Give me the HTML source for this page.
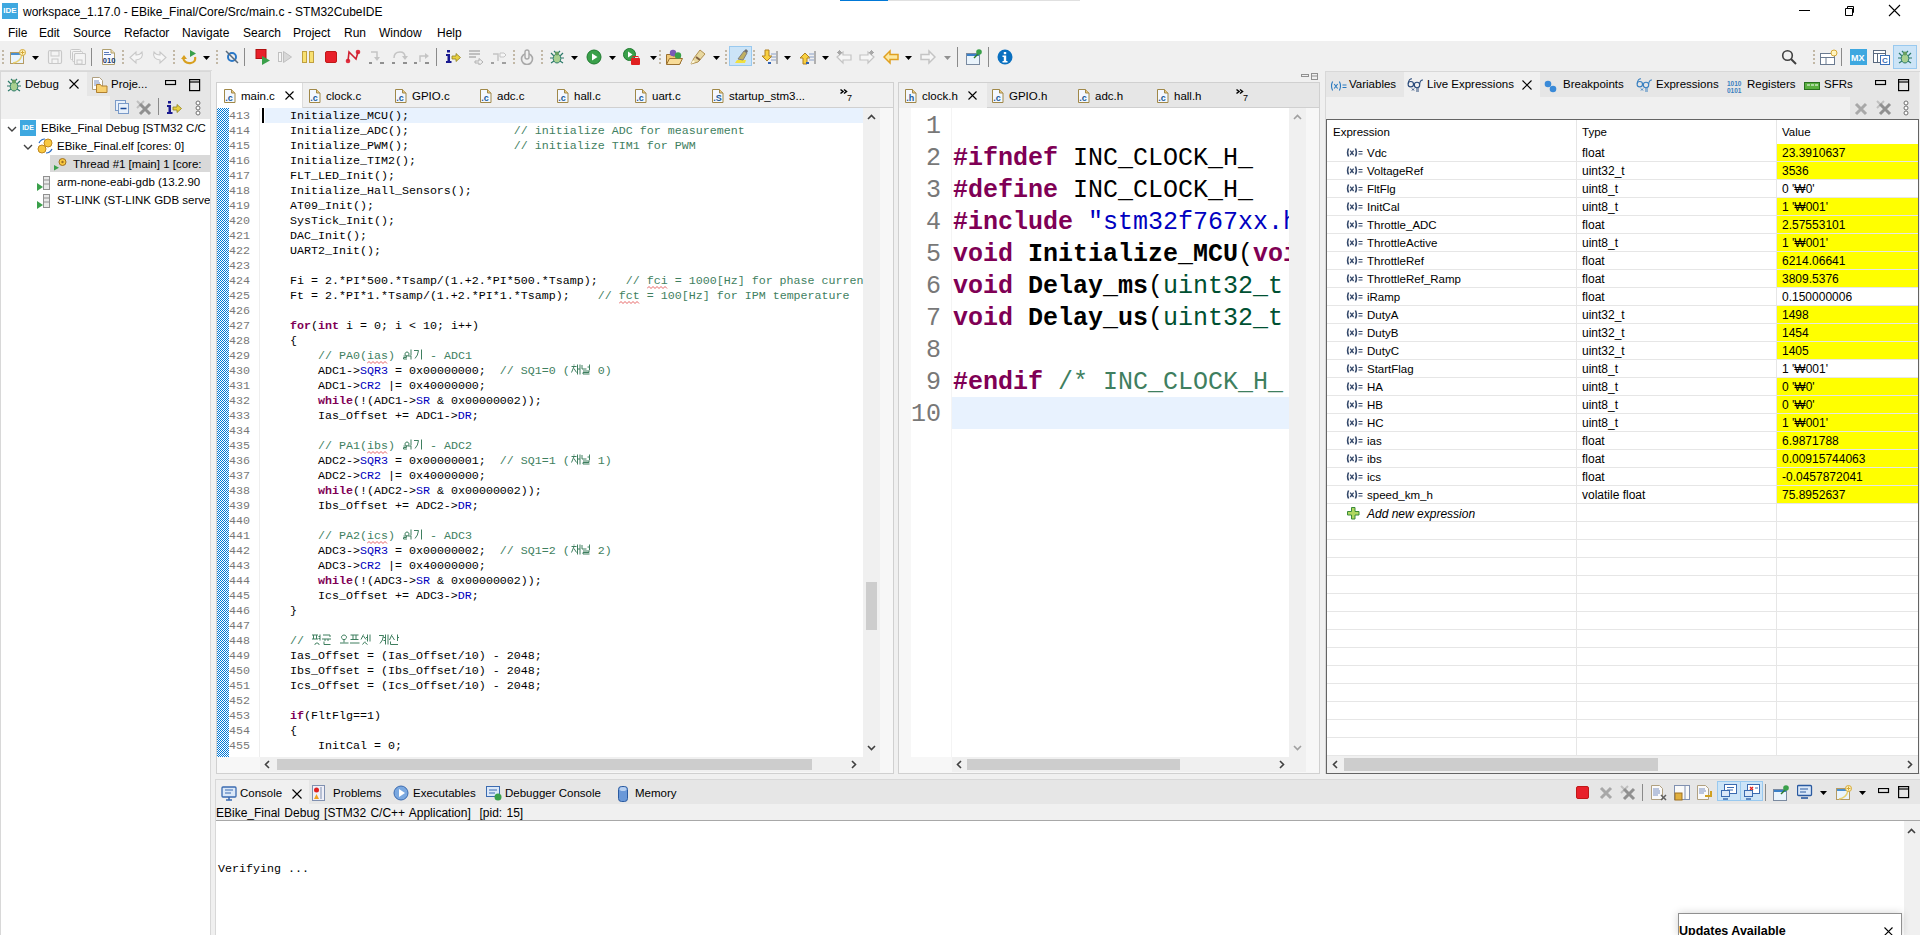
<!DOCTYPE html><html><head><meta charset="utf-8"><style>
*{margin:0;padding:0;box-sizing:border-box}
html,body{width:1920px;height:935px;overflow:hidden;background:#f0f0f0;font-family:"Liberation Sans",sans-serif;font-size:12px;color:#000;position:relative}
.abs{position:absolute}
.t{position:absolute;white-space:pre;line-height:1}
.mono{font-family:"Liberation Mono",monospace}
.k{color:#7f0055;font-weight:bold}
.f{color:#0000c0}
.c{color:#3f7f5f}
.ln{position:absolute;white-space:pre;font-family:"Liberation Mono",monospace;color:#787878;text-align:right}
</style></head><body>
<div class="abs" style="left:0px;top:0px;width:1920px;height:41px;background:#fff;"></div>
<div class="abs" style="left:840px;top:0px;width:48px;height:1px;background:#0078d7;"></div>
<div class="abs" style="left:888px;top:0px;width:192px;height:1px;background:#e0e0e0;"></div>
<div class="abs" style="left:2px;top:3px;width:16px;height:16px;background:#3ea8e0;color:#fff;font-size:8px;font-weight:bold;text-align:center;line-height:16px">IDE</div>
<div class="t" style="left:23px;top:6px;font-size:12px">workspace_1.17.0 - EBike_Final/Core/Src/main.c - STM32CubeIDE</div>
<div class="abs" style="left:1799px;top:10px;width:11px;height:1px;background:#000;"></div>
<svg class="abs" style="left:1843px;top:5px" width="12" height="12"><path d="M2.5 3.5h7v7h-7z M4.5 3.5v-2h6v6h-1.5" fill="none" stroke="#000" stroke-width="1"/></svg>
<svg class="abs" style="left:1888px;top:4px" width="13" height="13"><path d="M1 1L12 12M12 1L1 12" stroke="#000" stroke-width="1.1"/></svg>
<div class="t" style="left:8px;top:27px;font-size:12px">File</div>
<div class="t" style="left:39px;top:27px;font-size:12px">Edit</div>
<div class="t" style="left:73px;top:27px;font-size:12px">Source</div>
<div class="t" style="left:124px;top:27px;font-size:12px">Refactor</div>
<div class="t" style="left:182px;top:27px;font-size:12px">Navigate</div>
<div class="t" style="left:243px;top:27px;font-size:12px">Search</div>
<div class="t" style="left:293px;top:27px;font-size:12px">Project</div>
<div class="t" style="left:344px;top:27px;font-size:12px">Run</div>
<div class="t" style="left:379px;top:27px;font-size:12px">Window</div>
<div class="t" style="left:437px;top:27px;font-size:12px">Help</div>
<div class="abs" style="left:0px;top:70px;width:212px;height:1px;background:#dcdcdc;"></div>
<svg class="abs" style="left:2px;top:50px" width="2" height="14" viewBox="0 0 2 14"><rect x="0" y="0" width="2" height="2" fill="#c2b8a6"/><rect x="0" y="4" width="2" height="2" fill="#c2b8a6"/><rect x="0" y="8" width="2" height="2" fill="#c2b8a6"/><rect x="0" y="12" width="2" height="2" fill="#c2b8a6"/></svg>
<svg class="abs" style="left:10px;top:49px" width="16" height="16" viewBox="0 0 16 16"><rect x="0.5" y="3.5" width="13" height="11" fill="#eaf4fc" stroke="#b59b62"/><rect x="1" y="4" width="12" height="2" fill="#4a90d0"/><path d="M3 14 Q10 13 12 6" stroke="#e8d070" fill="none" stroke-width="1.5"/><circle cx="12.5" cy="3.5" r="3" fill="#fff4c0" stroke="#d4a838"/><path d="M12.5 1.5v4M10.5 3.5h4" stroke="#d4a838"/></svg>
<svg class="abs" style="left:32px;top:56px" width="7" height="4" viewBox="0 0 7 4"><path d="M0 0h7L3.5 4z" fill="#000"/></svg>
<svg class="abs" style="left:47px;top:49px" width="16" height="16" viewBox="0 0 16 16"><rect x="1.5" y="1.5" width="13" height="13" rx="1.5" fill="#f4f4f4" stroke="#c8c8c8" stroke-width="1.2"/><rect x="4" y="2" width="8" height="5" fill="none" stroke="#c8c8c8"/><rect x="5" y="10" width="6" height="4.5" fill="none" stroke="#c8c8c8"/></svg>
<svg class="abs" style="left:70px;top:49px" width="16" height="16" viewBox="0 0 16 16"><rect x="0.5" y="0.5" width="10" height="10" rx="1" fill="#f4f4f4" stroke="#c8c8c8"/><rect x="2.5" y="2.5" width="10" height="10" rx="1" fill="#f4f4f4" stroke="#c8c8c8"/><rect x="4.5" y="4.5" width="11" height="11" rx="1" fill="#f4f4f4" stroke="#c8c8c8" stroke-width="1.1"/><rect x="7" y="11" width="5" height="4" fill="none" stroke="#c8c8c8"/></svg>
<svg class="abs" style="left:91px;top:48px" width="1" height="18" viewBox="0 0 1 18"><rect width="1" height="18" fill="#8a8a8a"/></svg>
<svg class="abs" style="left:101px;top:49px" width="16" height="16" viewBox="0 0 16 16"><path d="M1.5 0.5h8.5l3.5 3.5v11.5h-12z" fill="#f8faff" stroke="#b0a070"/><path d="M10 0.5v3.5h3.5" fill="#f0e0b0" stroke="#b0a070"/><path d="M3 3.5h5M3 5.5h7" fill="none" stroke="#5a7ab8"/><text x="1.8" y="14" font-family="Liberation Sans" font-weight="bold" font-size="7.5" fill="#1a3a70">010</text></svg>
<svg class="abs" style="left:122px;top:50px" width="2" height="14" viewBox="0 0 2 14"><rect x="0" y="0" width="2" height="2" fill="#c2b8a6"/><rect x="0" y="4" width="2" height="2" fill="#c2b8a6"/><rect x="0" y="8" width="2" height="2" fill="#c2b8a6"/><rect x="0" y="12" width="2" height="2" fill="#c2b8a6"/></svg>
<svg class="abs" style="left:129px;top:49px" width="16" height="16" viewBox="0 0 16 16"><g ><path d="M13 3 Q15 10 7 11 V14 L1 8.5 L7 3 V6 Q11 6 13 3z" fill="#f6f6f6" stroke="#c8c8c8" stroke-width="1.1"/></g></svg>
<svg class="abs" style="left:151px;top:49px" width="16" height="16" viewBox="0 0 16 16"><g transform="translate(16,0) scale(-1,1)"><path d="M13 3 Q15 10 7 11 V14 L1 8.5 L7 3 V6 Q11 6 13 3z" fill="#f6f6f6" stroke="#c8c8c8" stroke-width="1.1"/></g></svg>
<svg class="abs" style="left:173px;top:50px" width="2" height="14" viewBox="0 0 2 14"><rect x="0" y="0" width="2" height="2" fill="#c2b8a6"/><rect x="0" y="4" width="2" height="2" fill="#c2b8a6"/><rect x="0" y="8" width="2" height="2" fill="#c2b8a6"/><rect x="0" y="12" width="2" height="2" fill="#c2b8a6"/></svg>
<svg class="abs" style="left:181px;top:49px" width="16" height="16" viewBox="0 0 16 16"><path d="M9 1v7l6-3.5z" fill="#3aa04a"/><path d="M2 9 Q4 15 10 14 Q15 13 14 8" fill="none" stroke="#d8a020" stroke-width="2.2"/><path d="M0 10l3-4 3 4z" fill="#d8a020"/></svg>
<svg class="abs" style="left:203px;top:56px" width="7" height="4" viewBox="0 0 7 4"><path d="M0 0h7L3.5 4z" fill="#000"/></svg>
<svg class="abs" style="left:216px;top:50px" width="2" height="14" viewBox="0 0 2 14"><rect x="0" y="0" width="2" height="2" fill="#c2b8a6"/><rect x="0" y="4" width="2" height="2" fill="#c2b8a6"/><rect x="0" y="8" width="2" height="2" fill="#c2b8a6"/><rect x="0" y="12" width="2" height="2" fill="#c2b8a6"/></svg>
<svg class="abs" style="left:224px;top:49px" width="16" height="16" viewBox="0 0 16 16"><circle cx="8" cy="8" r="4" fill="none" stroke="#2a78c8" stroke-width="2"/><path d="M2 2L14 14" stroke="#5a6a7a" stroke-width="1.5"/></svg>
<svg class="abs" style="left:244px;top:48px" width="1" height="18" viewBox="0 0 1 18"><rect width="1" height="18" fill="#8a8a8a"/></svg>
<svg class="abs" style="left:255px;top:49px" width="16" height="16" viewBox="0 0 16 16"><rect x="1" y="0.5" width="10" height="9" fill="#e8202a" stroke="#b01010"/><path d="M7 7v9l8-4.5z" fill="#3aa04a"/></svg>
<svg class="abs" style="left:277px;top:49px" width="16" height="16" viewBox="0 0 16 16"><rect x="1.5" y="3.5" width="3" height="9" fill="#f6f6f6" stroke="#c0c0c0"/><path d="M6.5 2.5v11l8-5.5z" fill="#d8d8d8" stroke="#c0c0c0"/></svg>
<svg class="abs" style="left:300px;top:49px" width="16" height="16" viewBox="0 0 16 16"><rect x="2.5" y="2.5" width="4" height="11" fill="#f8e070" stroke="#c0a040"/><rect x="9.5" y="2.5" width="4" height="11" fill="#f8e070" stroke="#c0a040"/></svg>
<svg class="abs" style="left:324px;top:49px" width="16" height="16" viewBox="0 0 16 16"><rect x="1.5" y="2.5" width="11" height="11" rx="1.5" fill="#e8202a" stroke="#c01818"/></svg>
<svg class="abs" style="left:345px;top:49px" width="16" height="16" viewBox="0 0 16 16"><circle cx="3" cy="12" r="2.3" fill="#e03040"/><circle cx="13" cy="3" r="2.3" fill="#e03040"/><path d="M3 12L4 3L11 10L13 3" fill="none" stroke="#d02030" stroke-width="1.6"/></svg>
<svg class="abs" style="left:369px;top:49px" width="16" height="16" viewBox="0 0 16 16"><path d="M2 3h6v6" fill="none" stroke="#c4c4c4" stroke-width="1.5"/><path d="M5 8l3 4 3-4z" fill="#c4c4c4"/><rect x="0" y="13" width="3" height="2" fill="#909090"/><rect x="11" y="13" width="4" height="2" fill="#909090"/></svg>
<svg class="abs" style="left:392px;top:49px" width="16" height="16" viewBox="0 0 16 16"><path d="M2 9 Q2 3 8 3 Q13 3 13 8" fill="none" stroke="#c4c4c4" stroke-width="1.5"/><path d="M10 7l3 4 3-4z" fill="#c4c4c4"/><rect x="0" y="13" width="3" height="2" fill="#909090"/><rect x="11" y="13" width="4" height="2" fill="#909090"/></svg>
<svg class="abs" style="left:414px;top:49px" width="16" height="16" viewBox="0 0 16 16"><path d="M6 13V7h6" fill="none" stroke="#c4c4c4" stroke-width="1.5"/><path d="M11 4l4 3-4 3z" fill="#c4c4c4"/><rect x="0" y="13" width="3" height="2" fill="#909090"/><rect x="11" y="13" width="4" height="2" fill="#909090"/></svg>
<svg class="abs" style="left:436px;top:48px" width="1" height="18" viewBox="0 0 1 18"><rect width="1" height="18" fill="#8a8a8a"/></svg>
<svg class="abs" style="left:445px;top:49px" width="16" height="16" viewBox="0 0 16 16"><rect x="2" y="1" width="3" height="2.5" fill="#1a1a90"/><path d="M1 5h4v7h1.5v2h-5.5v-2h1.5v-5h-1.5z" fill="#1a1a90"/><path d="M7 7h4V4.5l4.5 4-4.5 4V10H7z" fill="#e8d040" stroke="#908020" stroke-width="0.8"/></svg>
<svg class="abs" style="left:468px;top:49px" width="16" height="16" viewBox="0 0 16 16"><path d="M1 2h11M1 5h11M1 8h7" stroke="#b0b0b0" stroke-width="1.6"/><path d="M7 12h4v-2.5l4 3.5-4 3.5V14H7z" fill="#f0f0f0" stroke="#b0b0b0"/></svg>
<svg class="abs" style="left:491px;top:49px" width="16" height="16" viewBox="0 0 16 16"><path d="M2 5h5v7" fill="none" stroke="#c4c4c4" stroke-width="1.5"/><path d="M9 4h4l2 2-2 2H9z" fill="#f6f6f6" stroke="#c4c4c4"/><rect x="0" y="13" width="3" height="2" fill="#a0a0a0"/><rect x="11" y="13" width="4" height="2" fill="#a0a0a0"/></svg>
<svg class="abs" style="left:513px;top:50px" width="2" height="14" viewBox="0 0 2 14"><rect x="0" y="0" width="2" height="2" fill="#c2b8a6"/><rect x="0" y="4" width="2" height="2" fill="#c2b8a6"/><rect x="0" y="8" width="2" height="2" fill="#c2b8a6"/><rect x="0" y="12" width="2" height="2" fill="#c2b8a6"/></svg>
<svg class="abs" style="left:519px;top:49px" width="16" height="16" viewBox="0 0 16 16"><circle cx="8" cy="10" r="5.5" fill="#f0f0f0" stroke="#a8a8a8" stroke-width="1.6"/><rect x="6" y="1" width="4" height="9" rx="2" fill="#f0f0f0" stroke="#a8a8a8" stroke-width="1.4"/></svg>
<svg class="abs" style="left:541px;top:50px" width="2" height="14" viewBox="0 0 2 14"><rect x="0" y="0" width="2" height="2" fill="#c2b8a6"/><rect x="0" y="4" width="2" height="2" fill="#c2b8a6"/><rect x="0" y="8" width="2" height="2" fill="#c2b8a6"/><rect x="0" y="12" width="2" height="2" fill="#c2b8a6"/></svg>
<svg class="abs" style="left:549px;top:49px" width="16" height="16" viewBox="0 0 16 16"><path d="M2 4l3 3M14 4l-3 3M1 9h3M15 9h-3M2 14l3-2M14 14l-3-2M5 2l2 2M11 2l-2 2" stroke="#2c7a6a" stroke-width="1.2"/><ellipse cx="8" cy="9.5" rx="3.8" ry="4.5" fill="#a8d090" stroke="#2c7a6a"/><circle cx="8" cy="4.5" r="2" fill="#6aa060"/></svg>
<svg class="abs" style="left:571px;top:56px" width="7" height="4" viewBox="0 0 7 4"><path d="M0 0h7L3.5 4z" fill="#000"/></svg>
<svg class="abs" style="left:586px;top:49px" width="16" height="16" viewBox="0 0 16 16"><circle cx="8" cy="8" r="7" fill="#3aa04a" stroke="#1e7a2e"/><path d="M6 4.5v7l5.5-3.5z" fill="#fff"/></svg>
<svg class="abs" style="left:609px;top:56px" width="7" height="4" viewBox="0 0 7 4"><path d="M0 0h7L3.5 4z" fill="#000"/></svg>
<svg class="abs" style="left:623px;top:48px" width="18" height="18" viewBox="0 0 18 18"><circle cx="6.5" cy="6.5" r="6" fill="#3aa04a" stroke="#1e7a2e"/><path d="M5 3.5v6l4.5-3z" fill="#fff"/><rect x="8" y="10" width="9" height="7" rx="1" fill="#e02020"/><rect x="10" y="8.5" width="5" height="2" fill="none" stroke="#e02020"/></svg>
<svg class="abs" style="left:650px;top:56px" width="7" height="4" viewBox="0 0 7 4"><path d="M0 0h7L3.5 4z" fill="#000"/></svg>
<svg class="abs" style="left:659px;top:50px" width="2" height="14" viewBox="0 0 2 14"><rect x="0" y="0" width="2" height="2" fill="#c2b8a6"/><rect x="0" y="4" width="2" height="2" fill="#c2b8a6"/><rect x="0" y="8" width="2" height="2" fill="#c2b8a6"/><rect x="0" y="12" width="2" height="2" fill="#c2b8a6"/></svg>
<svg class="abs" style="left:666px;top:49px" width="17" height="16" viewBox="0 0 17 16"><path d="M0.5 5.5h5l1.5 1.5h7v8h-13.5z" fill="#f0c878" stroke="#9a7030"/><path d="M0.5 15.5l3-6h13l-3 6z" fill="#f8dc98" stroke="#9a7030"/><circle cx="7" cy="4" r="3.2" fill="#7a5ab8"/><circle cx="12" cy="6.5" r="3.2" fill="#3aa04a"/></svg>
<svg class="abs" style="left:690px;top:49px" width="16" height="16" viewBox="0 0 16 16"><path d="M1 15l3-6 6-8 5 4-7 8z" fill="#e8d8a0" stroke="#b09050"/><path d="M6 8l4 3" stroke="#806040" stroke-width="2"/><path d="M1 15l2-4 2 2z" fill="#fffbe0"/></svg>
<svg class="abs" style="left:713px;top:56px" width="7" height="4" viewBox="0 0 7 4"><path d="M0 0h7L3.5 4z" fill="#000"/></svg>
<svg class="abs" style="left:725px;top:50px" width="2" height="14" viewBox="0 0 2 14"><rect x="0" y="0" width="2" height="2" fill="#c2b8a6"/><rect x="0" y="4" width="2" height="2" fill="#c2b8a6"/><rect x="0" y="8" width="2" height="2" fill="#c2b8a6"/><rect x="0" y="12" width="2" height="2" fill="#c2b8a6"/></svg>
<div class="abs" style="left:729px;top:46px;width:23px;height:20px;background:#cce4f7;border:1px solid #99c9ef"></div><svg class="abs" style="left:733px;top:48px" width="16" height="16" viewBox="0 0 16 16"><path d="M2 15h10l1-3H4z" fill="#f0e040"/><path d="M5 11L11 3l3 2-4 7z" fill="#c0b060" stroke="#808080"/><path d="M11 3l2-2 2 2-1 2z" fill="#707070"/></svg>
<svg class="abs" style="left:753px;top:50px" width="2" height="14" viewBox="0 0 2 14"><rect x="0" y="0" width="2" height="2" fill="#c2b8a6"/><rect x="0" y="4" width="2" height="2" fill="#c2b8a6"/><rect x="0" y="8" width="2" height="2" fill="#c2b8a6"/><rect x="0" y="12" width="2" height="2" fill="#c2b8a6"/></svg>
<svg class="abs" style="left:762px;top:49px" width="16" height="16" viewBox="0 0 16 16"><path d="M3 1h4v6h3l-5 5-5-5h3z" fill="#f8d040" stroke="#b08020"/><path d="M9 5h5M9 8h5M9 11h5" stroke="#8aa0c8"/><rect x="6" y="13" width="3" height="2" fill="#3060b0"/><path d="M15 2v13" stroke="#707070"/></svg>
<svg class="abs" style="left:784px;top:56px" width="7" height="4" viewBox="0 0 7 4"><path d="M0 0h7L3.5 4z" fill="#000"/></svg>
<svg class="abs" style="left:800px;top:49px" width="16" height="16" viewBox="0 0 16 16"><path d="M3 15h4v-6h3l-5-5-5 5h3z" fill="#f8d040" stroke="#b08020"/><path d="M9 5h5M9 8h5M9 11h5" stroke="#8aa0c8"/><rect x="6" y="13" width="3" height="2" fill="#3060b0"/><path d="M15 2v13" stroke="#707070"/></svg>
<svg class="abs" style="left:822px;top:56px" width="7" height="4" viewBox="0 0 7 4"><path d="M0 0h7L3.5 4z" fill="#000"/></svg>
<svg class="abs" style="left:836px;top:49px" width="16" height="16" viewBox="0 0 16 16"><g ><path d="M1 8l6-5v3h8v5H7v3z" fill="#f6f6f6" stroke="#c4c4c4" stroke-width="1.2"/><path d="M2 2l3 3M5 2L2 5M3.5 1v5M1 3.5h5" stroke="#a8a8a8"/></g></svg>
<svg class="abs" style="left:859px;top:49px" width="16" height="16" viewBox="0 0 16 16"><g transform="translate(16,0) scale(-1,1)"><path d="M1 8l6-5v3h8v5H7v3z" fill="#f6f6f6" stroke="#c4c4c4" stroke-width="1.2"/><path d="M2 2l3 3M5 2L2 5M3.5 1v5M1 3.5h5" stroke="#a8a8a8"/></g></svg>
<svg class="abs" style="left:883px;top:49px" width="16" height="16" viewBox="0 0 16 16"><g ><path d="M1 8l6-6v3.5h8v5H7V14z" fill="#fce8a0" stroke="#e0a020" stroke-width="1.5"/></g></svg>
<svg class="abs" style="left:905px;top:56px" width="7" height="4" viewBox="0 0 7 4"><path d="M0 0h7L3.5 4z" fill="#000"/></svg>
<svg class="abs" style="left:920px;top:49px" width="16" height="16" viewBox="0 0 16 16"><g transform="translate(16,0) scale(-1,1)"><path d="M1 8l6-6v3.5h8v5H7V14z" fill="#f6f6f6" stroke="#c4c4c4" stroke-width="1.5"/></g></svg>
<svg class="abs" style="left:944px;top:56px" width="7" height="4" viewBox="0 0 7 4"><path d="M0 0h7L3.5 4z" fill="#909090"/></svg>
<svg class="abs" style="left:957px;top:47px" width="1" height="20" viewBox="0 0 1 20"><rect width="1" height="20" fill="#8a8a8a"/></svg>
<svg class="abs" style="left:966px;top:49px" width="16" height="16" viewBox="0 0 16 16"><rect x="0.5" y="4.5" width="13" height="11" fill="#eaf4fc" stroke="#7a8aa0"/><rect x="1" y="5" width="12" height="2" fill="#3a80c8"/><path d="M8 9l5-5" stroke="#2a7a2a" stroke-width="1.5"/><circle cx="13" cy="3" r="2.8" fill="#3aa04a"/></svg>
<svg class="abs" style="left:988px;top:47px" width="1" height="20" viewBox="0 0 1 20"><rect width="1" height="20" fill="#8a8a8a"/></svg>
<svg class="abs" style="left:997px;top:49px" width="16" height="16" viewBox="0 0 16 16"><circle cx="8" cy="8" r="7.5" fill="#0a70c0"/><rect x="6.8" y="3" width="2.4" height="2.2" fill="#fff"/><path d="M5.5 6.5h3.7v5.5h1.3v1.5h-5v-1.5h1.3v-4h-1.3z" fill="#fff"/></svg>
<svg class="abs" style="left:1781px;top:49px" width="16" height="16" viewBox="0 0 16 16"><circle cx="6.5" cy="6.5" r="4.8" fill="none" stroke="#404040" stroke-width="1.6"/><path d="M10 10l5 5" stroke="#404040" stroke-width="2"/></svg>
<svg class="abs" style="left:1813px;top:50px" width="2" height="14" viewBox="0 0 2 14"><rect x="0" y="0" width="2" height="2" fill="#c2b8a6"/><rect x="0" y="4" width="2" height="2" fill="#c2b8a6"/><rect x="0" y="8" width="2" height="2" fill="#c2b8a6"/><rect x="0" y="12" width="2" height="2" fill="#c2b8a6"/></svg>
<svg class="abs" style="left:1820px;top:49px" width="18" height="16" viewBox="0 0 18 16"><rect x="0.5" y="4.5" width="14" height="11" fill="#fff" stroke="#6a7a90"/><path d="M0.5 8.5h14M6 8.5v7" stroke="#6a7a90"/><circle cx="14" cy="4" r="3" fill="#fff4c0" stroke="#d4a838"/></svg>
<svg class="abs" style="left:1841px;top:48px" width="1" height="18" viewBox="0 0 1 18"><rect width="1" height="18" fill="#8a8a8a"/></svg>
<svg class="abs" style="left:1850px;top:49px" width="17" height="16" viewBox="0 0 17 16"><rect x="0" y="0" width="17" height="16" fill="#3ea8e0"/><text x="1" y="12" font-family="Liberation Sans" font-weight="bold" font-size="9" fill="#fff">MX</text></svg>
<svg class="abs" style="left:1873px;top:49px" width="18" height="16" viewBox="0 0 18 16"><rect x="0.5" y="1.5" width="12" height="12" fill="#fff" stroke="#5a6a80"/><path d="M0.5 4.5h12M4.5 4.5v9" stroke="#5a6a80"/><rect x="7.5" y="6.5" width="9" height="9" fill="#fff" stroke="#3a70b8"/><text x="9" y="14" font-family="Liberation Sans" font-weight="bold" font-size="8" fill="#3a70b8">C</text></svg>
<div class="abs" style="left:1893px;top:45px;width:24px;height:24px;background:#cce4f7;border:1px solid #99c9ef"></div><svg class="abs" style="left:1897px;top:49px" width="16" height="16" viewBox="0 0 16 16"><path d="M2 4l3 3M14 4l-3 3M1 9h3M15 9h-3M2 14l3-2M14 14l-3-2M5 2l2 2M11 2l-2 2" stroke="#2c7a6a" stroke-width="1.2"/><ellipse cx="8" cy="9.5" rx="3.8" ry="4.5" fill="#a8d090" stroke="#2c7a6a"/><circle cx="8" cy="4.5" r="2" fill="#6aa060"/></svg>
<div class="abs" style="left:0px;top:71px;width:211px;height:864px;background:#d8d8d8;"></div>
<div class="abs" style="left:1px;top:72px;width:209px;height:863px;background:#f0f0f0;"></div>
<div class="abs" style="left:87px;top:72px;width:123px;height:24px;background:#e6e6e6;"></div>
<div class="abs" style="left:110px;top:96px;width:100px;height:23px;background:#e6e6e6;"></div>
<div class="abs" style="left:1px;top:119px;width:209px;height:816px;background:#fff;"></div>
<svg class="abs" style="left:6px;top:77px" width="16" height="16" viewBox="0 0 16 16"><path d="M2 4l3 3M14 4l-3 3M1 9h3M15 9h-3M2 14l3-2M14 14l-3-2M5 2l2 2M11 2l-2 2" stroke="#2c7a6a" stroke-width="1.2"/><ellipse cx="8" cy="9.5" rx="3.8" ry="4.5" fill="#a8d090" stroke="#2c7a6a"/><circle cx="8" cy="4.5" r="2" fill="#6aa060"/></svg>
<div class="t" style="left:25px;top:79px;font-size:11.5px">Debug</div>
<svg class="abs" style="left:69px;top:79px" width="10" height="10" viewBox="0 0 10 10"><path d="M0.5 0.5L9.5 9.5M9.5 0.5L0.5 9.5" stroke="#000" stroke-width="1.1"/></svg>
<svg class="abs" style="left:92px;top:77px" width="16" height="16" viewBox="0 0 16 16"><path d="M0.5 0.5h7l3 3v9h-10z" fill="#fff" stroke="#b0a080"/><path d="M2 4h5M2 6h6M2 8h6" stroke="#7a90c0"/><path d="M4.5 7.5h4l1 1.5h5.5v6.5h-10.5z" fill="#f8d070" stroke="#b08030"/></svg>
<div class="t" style="left:111px;top:79px;font-size:11.5px">Proje...</div>
<svg class="abs" style="left:165px;top:80px" width="12" height="6" viewBox="0 0 12 6"><rect x="0.5" y="0.5" width="10" height="4" fill="none" stroke="#000" stroke-width="1.2"/></svg>
<svg class="abs" style="left:189px;top:79px" width="12" height="13" viewBox="0 0 12 13"><rect x="0.6" y="0.6" width="10" height="11" fill="none" stroke="#000" stroke-width="1.2"/><path d="M0.6 3h10" stroke="#000" stroke-width="1.2"/></svg>
<svg class="abs" style="left:115px;top:100px" width="14" height="14" viewBox="0 0 14 14"><rect x="0.5" y="0.5" width="10" height="10" fill="#e8f0fa" stroke="#7a9ac8"/><rect x="3.5" y="3.5" width="10" height="10" fill="#e8f0fa" stroke="#7a9ac8"/><path d="M5.5 8.5h6" stroke="#1a4a9a" stroke-width="1.5"/></svg>
<svg class="abs" style="left:136px;top:100px" width="16" height="16" viewBox="0 0 16 16"><path d="M1 1l7 7M8 1L1 8" stroke="#c0c0c0" stroke-width="2"/><path d="M4 4l10 10M14 4L4 14" stroke="#909090" stroke-width="3"/></svg>
<svg class="abs" style="left:158px;top:98px" width="1" height="17" viewBox="0 0 1 17"><rect width="1" height="17" fill="#8a8a8a"/></svg>
<svg class="abs" style="left:166px;top:100px" width="16" height="16" viewBox="0 0 16 16"><rect x="2" y="1" width="3" height="2.5" fill="#1a1a90"/><path d="M1 5h4v7h1.5v2h-5.5v-2h1.5v-5h-1.5z" fill="#1a1a90"/><path d="M7 7h4V4.5l4.5 4-4.5 4V10H7z" fill="#e8d040" stroke="#908020" stroke-width="0.8"/></svg>
<svg class="abs" style="left:195px;top:100px" width="6" height="16" viewBox="0 0 6 16"><circle cx="3" cy="3" r="2" fill="#fff" stroke="#707070"/><circle cx="3" cy="8" r="2" fill="#fff" stroke="#707070"/><circle cx="3" cy="13" r="2" fill="#fff" stroke="#707070"/></svg>
<div class="abs" style="left:1px;top:119px;width:209px;height:200px;overflow:hidden">
<svg class="abs" style="left:6px;top:7px" width="10" height="6" viewBox="0 0 10 6"><path d="M1 1l4 4 4-4" fill="none" stroke="#404040" stroke-width="1.4"/></svg>
<div class="abs" style="left:19px;top:1px;width:16px;height:16px;background:#3ea8e0;color:#fff;font-size:7px;font-weight:bold;text-align:center;line-height:16px">IDE</div>
<div class="t" style="left:40px;top:4px;font-size:11.5px">EBike_Final Debug [STM32 C/C</div>
<svg class="abs" style="left:22px;top:25px" width="10" height="6" viewBox="0 0 10 6"><path d="M1 1l4 4 4-4" fill="none" stroke="#404040" stroke-width="1.4"/></svg>
<svg class="abs" style="left:36px;top:19px" width="17" height="16" viewBox="0 0 17 16"><circle cx="11" cy="5" r="4" fill="#f8c840" stroke="#c08820"/><circle cx="5" cy="11" r="4" fill="#f8c840" stroke="#c08820"/><path d="M2 5Q4 1 8 1M15 11Q13 15 9 15" fill="none" stroke="#2a6ac0" stroke-width="1.2"/></svg>
<div class="t" style="left:56px;top:22px;font-size:11.5px">EBike_Final.elf [cores: 0]</div>
<div class="abs" style="left:49px;top:36px;width:160px;height:17px;background:#d9d9d9;"></div>
<svg class="abs" style="left:52px;top:38px" width="16" height="14" viewBox="0 0 16 14"><circle cx="9.5" cy="5" r="3.5" fill="#f8c840" stroke="#a07020"/><circle cx="9.5" cy="5" r="1.2" fill="#a07020"/><path d="M1 8v5.5l5-2.75z" fill="#3aa04a"/></svg>
<div class="t" style="left:72px;top:40px;font-size:11.5px">Thread #1 [main] 1 [core:</div>
<svg class="abs" style="left:36px;top:57px" width="17" height="15" viewBox="0 0 17 15"><rect x="6.5" y="0.5" width="6" height="13" fill="#e8e8e8" stroke="#909090"/><path d="M7 4h5M7 8h5" stroke="#909090"/><path d="M0 7v8l6-4z" fill="#3aa04a"/></svg>
<div class="t" style="left:56px;top:58px;font-size:11.5px">arm-none-eabi-gdb (13.2.90</div>
<svg class="abs" style="left:36px;top:75px" width="17" height="15" viewBox="0 0 17 15"><rect x="6.5" y="0.5" width="6" height="13" fill="#e8e8e8" stroke="#909090"/><path d="M7 4h5M7 8h5" stroke="#909090"/><path d="M0 7v8l6-4z" fill="#3aa04a"/></svg>
<div class="t" style="left:56px;top:76px;font-size:11.5px">ST-LINK (ST-LINK GDB serve</div>
</div>
<div class="abs" style="left:216px;top:82px;width:678px;height:692px;background:#d0d0d0;"></div>
<div class="abs" style="left:217px;top:83px;width:676px;height:690px;background:#f7f7f7;"></div>
<div class="abs" style="left:217px;top:83px;width:676px;height:24px;background:#f0f0f0;"></div>
<div class="abs" style="left:217px;top:107px;width:676px;height:1px;background:#d0d0d0;"></div>
<div class="abs" style="left:217px;top:83px;width:85px;height:26px;background:#fff;"></div>
<div class="abs" style="left:302px;top:83px;width:1px;height:25px;background:#dcdcdc;"></div>
<svg class="abs" style="left:224px;top:89px" width="12" height="14" viewBox="0 0 12 14"><path d="M0.5 0.5h7l3.5 3.5v9.5h-10.5z" fill="#f4f8ff" stroke="#a08848"/><path d="M7.5 0.5v3.5h3.5" fill="#e8c880" stroke="#a08848"/><text x="1.2" y="11.5" font-family="Liberation Sans" font-weight="bold" font-size="9" fill="#1a5a9a">.c</text></svg>
<div class="t" style="left:241px;top:91px;font-size:11.5px">main.c</div>
<svg class="abs" style="left:285px;top:91px" width="9" height="9" viewBox="0 0 9 9"><path d="M0.5 0.5L8.5 8.5M8.5 0.5L0.5 8.5" stroke="#000" stroke-width="1.1"/></svg>
<svg class="abs" style="left:309px;top:89px" width="12" height="14" viewBox="0 0 12 14"><path d="M0.5 0.5h7l3.5 3.5v9.5h-10.5z" fill="#f4f8ff" stroke="#a08848"/><path d="M7.5 0.5v3.5h3.5" fill="#e8c880" stroke="#a08848"/><text x="1.2" y="11.5" font-family="Liberation Sans" font-weight="bold" font-size="9" fill="#1a5a9a">.c</text></svg>
<div class="t" style="left:326px;top:91px;font-size:11.5px">clock.c</div>
<svg class="abs" style="left:395px;top:89px" width="12" height="14" viewBox="0 0 12 14"><path d="M0.5 0.5h7l3.5 3.5v9.5h-10.5z" fill="#f4f8ff" stroke="#a08848"/><path d="M7.5 0.5v3.5h3.5" fill="#e8c880" stroke="#a08848"/><text x="1.2" y="11.5" font-family="Liberation Sans" font-weight="bold" font-size="9" fill="#1a5a9a">.c</text></svg>
<div class="t" style="left:412px;top:91px;font-size:11.5px">GPIO.c</div>
<svg class="abs" style="left:480px;top:89px" width="12" height="14" viewBox="0 0 12 14"><path d="M0.5 0.5h7l3.5 3.5v9.5h-10.5z" fill="#f4f8ff" stroke="#a08848"/><path d="M7.5 0.5v3.5h3.5" fill="#e8c880" stroke="#a08848"/><text x="1.2" y="11.5" font-family="Liberation Sans" font-weight="bold" font-size="9" fill="#1a5a9a">.c</text></svg>
<div class="t" style="left:497px;top:91px;font-size:11.5px">adc.c</div>
<svg class="abs" style="left:557px;top:89px" width="12" height="14" viewBox="0 0 12 14"><path d="M0.5 0.5h7l3.5 3.5v9.5h-10.5z" fill="#f4f8ff" stroke="#a08848"/><path d="M7.5 0.5v3.5h3.5" fill="#e8c880" stroke="#a08848"/><text x="1.2" y="11.5" font-family="Liberation Sans" font-weight="bold" font-size="9" fill="#1a5a9a">.c</text></svg>
<div class="t" style="left:574px;top:91px;font-size:11.5px">hall.c</div>
<svg class="abs" style="left:635px;top:89px" width="12" height="14" viewBox="0 0 12 14"><path d="M0.5 0.5h7l3.5 3.5v9.5h-10.5z" fill="#f4f8ff" stroke="#a08848"/><path d="M7.5 0.5v3.5h3.5" fill="#e8c880" stroke="#a08848"/><text x="1.2" y="11.5" font-family="Liberation Sans" font-weight="bold" font-size="9" fill="#1a5a9a">.c</text></svg>
<div class="t" style="left:652px;top:91px;font-size:11.5px">uart.c</div>
<svg class="abs" style="left:712px;top:89px" width="12" height="14" viewBox="0 0 12 14"><path d="M0.5 0.5h7l3.5 3.5v9.5h-10.5z" fill="#f4f8ff" stroke="#a08848"/><path d="M7.5 0.5v3.5h3.5" fill="#e8c880" stroke="#a08848"/><text x="1.2" y="11.5" font-family="Liberation Sans" font-weight="bold" font-size="9" fill="#1a5a9a">.S</text></svg>
<div class="t" style="left:729px;top:91px;font-size:11.5px">startup_stm3...</div>
<svg class="abs" style="left:840px;top:88px" width="14" height="14" viewBox="0 0 14 14"><path d="M0.5 1.5l2.5 2-2.5 2M4 1.5l2.5 2-2.5 2" fill="none" stroke="#000" stroke-width="1.5"/><text x="7" y="13" font-family="Liberation Sans" font-size="9" fill="#000">7</text></svg>
<div class="abs" style="left:217px;top:108px;width:646px;height:649px;background:#fff;"></div>
<div class="abs" style="left:217px;top:108px;width:12px;height:649px;background:#fff;background-image:repeating-conic-gradient(#0078d7 0 25%,#fff 0 50%);background-size:2px 2px"></div>
<div class="abs" style="left:229px;top:108px;width:30px;height:649px;background:#fff;"></div>
<div class="abs" style="left:259px;top:108px;width:1px;height:649px;background:#eeeeee;"></div>
<div class="abs" style="left:265px;top:108px;width:598px;height:15px;background:#e8f2fe;"></div>
<div class="abs" style="left:262px;top:108px;width:2px;height:15px;background:#000;"></div>
<div class="abs" style="left:863px;top:108px;width:17px;height:649px;background:#f0f0f0;"></div>
<div class="abs" style="left:866px;top:582px;width:11px;height:48px;background:#cdcdcd;"></div>
<div class="abs" style="left:260px;top:757px;width:620px;height:15px;background:#f0f0f0;"></div>
<div class="abs" style="left:277px;top:759px;width:535px;height:11px;background:#cdcdcd;"></div>
<div class="ln" style="left:229px;top:109px;width:21px;font-size:11.67px;line-height:15px;height:15px">413</div>
<div class="t mono" style="left:262px;top:109px;font-size:11.67px;line-height:15px">    Initialize_MCU();</div>
<div class="ln" style="left:229px;top:124px;width:21px;font-size:11.67px;line-height:15px;height:15px">414</div>
<div class="t mono" style="left:262px;top:124px;font-size:11.67px;line-height:15px">    Initialize_ADC();               <span class="c">// initialize ADC for measurement</span></div>
<div class="ln" style="left:229px;top:139px;width:21px;font-size:11.67px;line-height:15px;height:15px">415</div>
<div class="t mono" style="left:262px;top:139px;font-size:11.67px;line-height:15px">    Initialize_PWM();               <span class="c">// initialize TIM1 for PWM</span></div>
<div class="ln" style="left:229px;top:154px;width:21px;font-size:11.67px;line-height:15px;height:15px">416</div>
<div class="t mono" style="left:262px;top:154px;font-size:11.67px;line-height:15px">    Initialize_TIM2();</div>
<div class="ln" style="left:229px;top:169px;width:21px;font-size:11.67px;line-height:15px;height:15px">417</div>
<div class="t mono" style="left:262px;top:169px;font-size:11.67px;line-height:15px">    FLT_LED_Init();</div>
<div class="ln" style="left:229px;top:184px;width:21px;font-size:11.67px;line-height:15px;height:15px">418</div>
<div class="t mono" style="left:262px;top:184px;font-size:11.67px;line-height:15px">    Initialize_Hall_Sensors();</div>
<div class="ln" style="left:229px;top:199px;width:21px;font-size:11.67px;line-height:15px;height:15px">419</div>
<div class="t mono" style="left:262px;top:199px;font-size:11.67px;line-height:15px">    AT09_Init();</div>
<div class="ln" style="left:229px;top:214px;width:21px;font-size:11.67px;line-height:15px;height:15px">420</div>
<div class="t mono" style="left:262px;top:214px;font-size:11.67px;line-height:15px">    SysTick_Init();</div>
<div class="ln" style="left:229px;top:229px;width:21px;font-size:11.67px;line-height:15px;height:15px">421</div>
<div class="t mono" style="left:262px;top:229px;font-size:11.67px;line-height:15px">    DAC_Init();</div>
<div class="ln" style="left:229px;top:244px;width:21px;font-size:11.67px;line-height:15px;height:15px">422</div>
<div class="t mono" style="left:262px;top:244px;font-size:11.67px;line-height:15px">    UART2_Init();</div>
<div class="ln" style="left:229px;top:259px;width:21px;font-size:11.67px;line-height:15px;height:15px">423</div>
<div class="t mono" style="left:262px;top:259px;font-size:11.67px;line-height:15px"></div>
<div class="ln" style="left:229px;top:274px;width:21px;font-size:11.67px;line-height:15px;height:15px">424</div>
<div class="t mono" style="left:262px;top:274px;font-size:11.67px;line-height:15px">    Fi = 2.*PI*500.*Tsamp/(1.+2.*PI*500.*Tsamp);    <span class="c">// fci = 1000[Hz] for phase curren</span></div>
<div class="ln" style="left:229px;top:289px;width:21px;font-size:11.67px;line-height:15px;height:15px">425</div>
<div class="t mono" style="left:262px;top:289px;font-size:11.67px;line-height:15px">    Ft = 2.*PI*1.*Tsamp/(1.+2.*PI*1.*Tsamp);    <span class="c">// fct = 100[Hz] for IPM temperature</span></div>
<div class="ln" style="left:229px;top:304px;width:21px;font-size:11.67px;line-height:15px;height:15px">426</div>
<div class="t mono" style="left:262px;top:304px;font-size:11.67px;line-height:15px"></div>
<div class="ln" style="left:229px;top:319px;width:21px;font-size:11.67px;line-height:15px;height:15px">427</div>
<div class="t mono" style="left:262px;top:319px;font-size:11.67px;line-height:15px">    <span class="k">for</span>(<span class="k">int</span> i = 0; i &lt; 10; i++)</div>
<div class="ln" style="left:229px;top:334px;width:21px;font-size:11.67px;line-height:15px;height:15px">428</div>
<div class="t mono" style="left:262px;top:334px;font-size:11.67px;line-height:15px">    {</div>
<div class="ln" style="left:229px;top:349px;width:21px;font-size:11.67px;line-height:15px;height:15px">429</div>
<div class="t mono" style="left:262px;top:349px;font-size:11.67px;line-height:15px"><span class="c">        // PA0(ias) <svg style="display:inline-block;vertical-align:-1px" width="21" height="11" viewBox="0 0 21 11"><path transform="translate(0.5,0.5)" d="M4.5 2.5a2 2 0 1 1 -0.01 0 M8.5 0v6 M1 6.5h3v1.5h-3v1.5h3.5 M5.5 6.5h3v3.5" fill="none" stroke="#3f7f5f" stroke-width="1"/><path transform="translate(11.0,0.5)" d="M1 1h4.5Q5 6 2 9 M8.5 0v10" fill="none" stroke="#3f7f5f" stroke-width="1"/></svg> - ADC1</span></div>
<div class="ln" style="left:229px;top:364px;width:21px;font-size:11.67px;line-height:15px;height:15px">430</div>
<div class="t mono" style="left:262px;top:364px;font-size:11.67px;line-height:15px">        ADC1-&gt;<span class="f">SQR3</span> = 0x00000000;  <span class="c">// SQ1=0 (<svg style="display:inline-block;vertical-align:-1px" width="21" height="11" viewBox="0 0 21 11"><path transform="translate(0.5,0.5)" d="M3.5 0v1 M1 2h5 M3.5 2L1 8 M3.5 4L6 8 M7 0v10 M9.5 0v10 M7 4.5h2.5" fill="none" stroke="#3f7f5f" stroke-width="1"/><path transform="translate(11.0,0.5)" d="M1 0.5v4h4.5 M8.5 0v6 M6.5 2.5h2 M2 6.5h6v1.5h-6v1.5h6.5" fill="none" stroke="#3f7f5f" stroke-width="1"/></svg> 0)</span></div>
<div class="ln" style="left:229px;top:379px;width:21px;font-size:11.67px;line-height:15px;height:15px">431</div>
<div class="t mono" style="left:262px;top:379px;font-size:11.67px;line-height:15px">        ADC1-&gt;<span class="f">CR2</span> |= 0x40000000;</div>
<div class="ln" style="left:229px;top:394px;width:21px;font-size:11.67px;line-height:15px;height:15px">432</div>
<div class="t mono" style="left:262px;top:394px;font-size:11.67px;line-height:15px">        <span class="k">while</span>(!(ADC1-&gt;<span class="f">SR</span> &amp; 0x00000002));</div>
<div class="ln" style="left:229px;top:409px;width:21px;font-size:11.67px;line-height:15px;height:15px">433</div>
<div class="t mono" style="left:262px;top:409px;font-size:11.67px;line-height:15px">        Ias_Offset += ADC1-&gt;<span class="f">DR</span>;</div>
<div class="ln" style="left:229px;top:424px;width:21px;font-size:11.67px;line-height:15px;height:15px">434</div>
<div class="t mono" style="left:262px;top:424px;font-size:11.67px;line-height:15px"></div>
<div class="ln" style="left:229px;top:439px;width:21px;font-size:11.67px;line-height:15px;height:15px">435</div>
<div class="t mono" style="left:262px;top:439px;font-size:11.67px;line-height:15px"><span class="c">        // PA1(ibs) <svg style="display:inline-block;vertical-align:-1px" width="21" height="11" viewBox="0 0 21 11"><path transform="translate(0.5,0.5)" d="M4.5 2.5a2 2 0 1 1 -0.01 0 M8.5 0v6 M1 6.5h3v1.5h-3v1.5h3.5 M5.5 6.5h3v3.5" fill="none" stroke="#3f7f5f" stroke-width="1"/><path transform="translate(11.0,0.5)" d="M1 1h4.5Q5 6 2 9 M8.5 0v10" fill="none" stroke="#3f7f5f" stroke-width="1"/></svg> - ADC2</span></div>
<div class="ln" style="left:229px;top:454px;width:21px;font-size:11.67px;line-height:15px;height:15px">436</div>
<div class="t mono" style="left:262px;top:454px;font-size:11.67px;line-height:15px">        ADC2-&gt;<span class="f">SQR3</span> = 0x00000001;  <span class="c">// SQ1=1 (<svg style="display:inline-block;vertical-align:-1px" width="21" height="11" viewBox="0 0 21 11"><path transform="translate(0.5,0.5)" d="M3.5 0v1 M1 2h5 M3.5 2L1 8 M3.5 4L6 8 M7 0v10 M9.5 0v10 M7 4.5h2.5" fill="none" stroke="#3f7f5f" stroke-width="1"/><path transform="translate(11.0,0.5)" d="M1 0.5v4h4.5 M8.5 0v6 M6.5 2.5h2 M2 6.5h6v1.5h-6v1.5h6.5" fill="none" stroke="#3f7f5f" stroke-width="1"/></svg> 1)</span></div>
<div class="ln" style="left:229px;top:469px;width:21px;font-size:11.67px;line-height:15px;height:15px">437</div>
<div class="t mono" style="left:262px;top:469px;font-size:11.67px;line-height:15px">        ADC2-&gt;<span class="f">CR2</span> |= 0x40000000;</div>
<div class="ln" style="left:229px;top:484px;width:21px;font-size:11.67px;line-height:15px;height:15px">438</div>
<div class="t mono" style="left:262px;top:484px;font-size:11.67px;line-height:15px">        <span class="k">while</span>(!(ADC2-&gt;<span class="f">SR</span> &amp; 0x00000002));</div>
<div class="ln" style="left:229px;top:499px;width:21px;font-size:11.67px;line-height:15px;height:15px">439</div>
<div class="t mono" style="left:262px;top:499px;font-size:11.67px;line-height:15px">        Ibs_Offset += ADC2-&gt;<span class="f">DR</span>;</div>
<div class="ln" style="left:229px;top:514px;width:21px;font-size:11.67px;line-height:15px;height:15px">440</div>
<div class="t mono" style="left:262px;top:514px;font-size:11.67px;line-height:15px"></div>
<div class="ln" style="left:229px;top:529px;width:21px;font-size:11.67px;line-height:15px;height:15px">441</div>
<div class="t mono" style="left:262px;top:529px;font-size:11.67px;line-height:15px"><span class="c">        // PA2(ics) <svg style="display:inline-block;vertical-align:-1px" width="21" height="11" viewBox="0 0 21 11"><path transform="translate(0.5,0.5)" d="M4.5 2.5a2 2 0 1 1 -0.01 0 M8.5 0v6 M1 6.5h3v1.5h-3v1.5h3.5 M5.5 6.5h3v3.5" fill="none" stroke="#3f7f5f" stroke-width="1"/><path transform="translate(11.0,0.5)" d="M1 1h4.5Q5 6 2 9 M8.5 0v10" fill="none" stroke="#3f7f5f" stroke-width="1"/></svg> - ADC3</span></div>
<div class="ln" style="left:229px;top:544px;width:21px;font-size:11.67px;line-height:15px;height:15px">442</div>
<div class="t mono" style="left:262px;top:544px;font-size:11.67px;line-height:15px">        ADC3-&gt;<span class="f">SQR3</span> = 0x00000002;  <span class="c">// SQ1=2 (<svg style="display:inline-block;vertical-align:-1px" width="21" height="11" viewBox="0 0 21 11"><path transform="translate(0.5,0.5)" d="M3.5 0v1 M1 2h5 M3.5 2L1 8 M3.5 4L6 8 M7 0v10 M9.5 0v10 M7 4.5h2.5" fill="none" stroke="#3f7f5f" stroke-width="1"/><path transform="translate(11.0,0.5)" d="M1 0.5v4h4.5 M8.5 0v6 M6.5 2.5h2 M2 6.5h6v1.5h-6v1.5h6.5" fill="none" stroke="#3f7f5f" stroke-width="1"/></svg> 2)</span></div>
<div class="ln" style="left:229px;top:559px;width:21px;font-size:11.67px;line-height:15px;height:15px">443</div>
<div class="t mono" style="left:262px;top:559px;font-size:11.67px;line-height:15px">        ADC3-&gt;<span class="f">CR2</span> |= 0x40000000;</div>
<div class="ln" style="left:229px;top:574px;width:21px;font-size:11.67px;line-height:15px;height:15px">444</div>
<div class="t mono" style="left:262px;top:574px;font-size:11.67px;line-height:15px">        <span class="k">while</span>(!(ADC3-&gt;<span class="f">SR</span> &amp; 0x00000002));</div>
<div class="ln" style="left:229px;top:589px;width:21px;font-size:11.67px;line-height:15px;height:15px">445</div>
<div class="t mono" style="left:262px;top:589px;font-size:11.67px;line-height:15px">        Ics_Offset += ADC3-&gt;<span class="f">DR</span>;</div>
<div class="ln" style="left:229px;top:604px;width:21px;font-size:11.67px;line-height:15px;height:15px">446</div>
<div class="t mono" style="left:262px;top:604px;font-size:11.67px;line-height:15px">    }</div>
<div class="ln" style="left:229px;top:619px;width:21px;font-size:11.67px;line-height:15px;height:15px">447</div>
<div class="t mono" style="left:262px;top:619px;font-size:11.67px;line-height:15px"></div>
<div class="ln" style="left:229px;top:634px;width:21px;font-size:11.67px;line-height:15px;height:15px">448</div>
<div class="t mono" style="left:262px;top:634px;font-size:11.67px;line-height:15px"><span class="c">    // <svg style="display:inline-block;vertical-align:-1px" width="21" height="11" viewBox="0 0 21 11"><path transform="translate(0.5,0.5)" d="M0.5 0.5h6 M2 0.5v4 M5 0.5v4 M0.5 4.5h6 M8.5 0v6 M7 2h1.5 M7 4h1.5 M5.5 8.5a2 1.5 0 1 1 -0.01 0" fill="none" stroke="#3f7f5f" stroke-width="1"/><path transform="translate(11.0,0.5)" d="M1 0.5h7v2 M0 4.5h9 M3 4.5v2 M6 4.5v2 M2 7v3h6.5" fill="none" stroke="#3f7f5f" stroke-width="1"/></svg> <svg style="display:inline-block;vertical-align:-1px" width="32" height="11" viewBox="0 0 32 11"><path transform="translate(0.5,0.5)" d="M4.5 0.5a2.5 2.3 0 1 1 -0.01 0 M4.5 5v3 M0.5 8.5h8.5" fill="none" stroke="#3f7f5f" stroke-width="1"/><path transform="translate(11.0,0.5)" d="M0.5 0.5h8 M3 0.5v4.5 M6 0.5v4.5 M0.5 5h8 M0 8.5h9.5" fill="none" stroke="#3f7f5f" stroke-width="1"/><path transform="translate(21.5,0.5)" d="M3 0L0.5 5 M3 1.5L5.5 5 M7 0v7 M9.5 0v7 M5.5 3h1.5 M4.5 7L2 10 M4.5 8L7 10" fill="none" stroke="#3f7f5f" stroke-width="1"/></svg> <svg style="display:inline-block;vertical-align:-1px" width="21" height="11" viewBox="0 0 21 11"><path transform="translate(0.5,0.5)" d="M0.5 1h4.5Q4.5 6 1.5 9 M7 0v10 M9.5 0v10 M5 3h2 M5 6h2" fill="none" stroke="#3f7f5f" stroke-width="1"/><path transform="translate(11.0,0.5)" d="M3 0L0.5 5.5 M3 1.5L5.5 5.5 M8.5 0v6.5 M8.5 3h1.5 M1.5 7v3h7.5" fill="none" stroke="#3f7f5f" stroke-width="1"/></svg></span></div>
<div class="ln" style="left:229px;top:649px;width:21px;font-size:11.67px;line-height:15px;height:15px">449</div>
<div class="t mono" style="left:262px;top:649px;font-size:11.67px;line-height:15px">    Ias_Offset = (Ias_Offset/10) - 2048;</div>
<div class="ln" style="left:229px;top:664px;width:21px;font-size:11.67px;line-height:15px;height:15px">450</div>
<div class="t mono" style="left:262px;top:664px;font-size:11.67px;line-height:15px">    Ibs_Offset = (Ibs_Offset/10) - 2048;</div>
<div class="ln" style="left:229px;top:679px;width:21px;font-size:11.67px;line-height:15px;height:15px">451</div>
<div class="t mono" style="left:262px;top:679px;font-size:11.67px;line-height:15px">    Ics_Offset = (Ics_Offset/10) - 2048;</div>
<div class="ln" style="left:229px;top:694px;width:21px;font-size:11.67px;line-height:15px;height:15px">452</div>
<div class="t mono" style="left:262px;top:694px;font-size:11.67px;line-height:15px"></div>
<div class="ln" style="left:229px;top:709px;width:21px;font-size:11.67px;line-height:15px;height:15px">453</div>
<div class="t mono" style="left:262px;top:709px;font-size:11.67px;line-height:15px">    <span class="k">if</span>(FltFlg==1)</div>
<div class="ln" style="left:229px;top:724px;width:21px;font-size:11.67px;line-height:15px;height:15px">454</div>
<div class="t mono" style="left:262px;top:724px;font-size:11.67px;line-height:15px">    {</div>
<div class="ln" style="left:229px;top:739px;width:21px;font-size:11.67px;line-height:15px;height:15px">455</div>
<div class="t mono" style="left:262px;top:739px;font-size:11.67px;line-height:15px">        InitCal = 0;</div>
<svg class="abs" style="left:647px;top:286px" width="21" height="3" viewBox="0 0 21 3"><path d="M0 2.5 L2 0.5 L4 2.5 L6 0.5 L8 2.5 L10 0.5 L12 2.5 L14 0.5 L16 2.5 L18 0.5 L20 2.5" fill="none" stroke="#e04040" stroke-width="0.8"/></svg>
<svg class="abs" style="left:619px;top:301px" width="21" height="3" viewBox="0 0 21 3"><path d="M0 2.5 L2 0.5 L4 2.5 L6 0.5 L8 2.5 L10 0.5 L12 2.5 L14 0.5 L16 2.5 L18 0.5 L20 2.5" fill="none" stroke="#e04040" stroke-width="0.8"/></svg>
<svg class="abs" style="left:367px;top:361px" width="21" height="3" viewBox="0 0 21 3"><path d="M0 2.5 L2 0.5 L4 2.5 L6 0.5 L8 2.5 L10 0.5 L12 2.5 L14 0.5 L16 2.5 L18 0.5 L20 2.5" fill="none" stroke="#e04040" stroke-width="0.8"/></svg>
<svg class="abs" style="left:367px;top:451px" width="21" height="3" viewBox="0 0 21 3"><path d="M0 2.5 L2 0.5 L4 2.5 L6 0.5 L8 2.5 L10 0.5 L12 2.5 L14 0.5 L16 2.5 L18 0.5 L20 2.5" fill="none" stroke="#e04040" stroke-width="0.8"/></svg>
<svg class="abs" style="left:367px;top:541px" width="21" height="3" viewBox="0 0 21 3"><path d="M0 2.5 L2 0.5 L4 2.5 L6 0.5 L8 2.5 L10 0.5 L12 2.5 L14 0.5 L16 2.5 L18 0.5 L20 2.5" fill="none" stroke="#e04040" stroke-width="0.8"/></svg>
<div class="abs" style="left:898px;top:82px;width:422px;height:692px;background:#d0d0d0;"></div>
<div class="abs" style="left:899px;top:83px;width:420px;height:690px;background:#f7f7f7;"></div>
<div class="abs" style="left:899px;top:83px;width:420px;height:24px;background:#e6e6e6;"></div>
<div class="abs" style="left:899px;top:107px;width:420px;height:1px;background:#d0d0d0;"></div>
<div class="abs" style="left:899px;top:83px;width:88px;height:26px;background:#f0f0f0;"></div>
<svg class="abs" style="left:905px;top:89px" width="12" height="14" viewBox="0 0 12 14"><path d="M0.5 0.5h7l3.5 3.5v9.5h-10.5z" fill="#f4f8ff" stroke="#a08848"/><path d="M7.5 0.5v3.5h3.5" fill="#e8c880" stroke="#a08848"/><text x="1.2" y="11.5" font-family="Liberation Sans" font-weight="bold" font-size="9" fill="#1a5a9a">.h</text></svg>
<div class="t" style="left:922px;top:91px;font-size:11.5px">clock.h</div>
<svg class="abs" style="left:968px;top:91px" width="9" height="9" viewBox="0 0 9 9"><path d="M0.5 0.5L8.5 8.5M8.5 0.5L0.5 8.5" stroke="#000" stroke-width="1.1"/></svg>
<svg class="abs" style="left:992px;top:89px" width="12" height="14" viewBox="0 0 12 14"><path d="M0.5 0.5h7l3.5 3.5v9.5h-10.5z" fill="#f4f8ff" stroke="#a08848"/><path d="M7.5 0.5v3.5h3.5" fill="#e8c880" stroke="#a08848"/><text x="1.2" y="11.5" font-family="Liberation Sans" font-weight="bold" font-size="9" fill="#1a5a9a">.c</text></svg>
<div class="t" style="left:1009px;top:91px;font-size:11.5px">GPIO.h</div>
<svg class="abs" style="left:1078px;top:89px" width="12" height="14" viewBox="0 0 12 14"><path d="M0.5 0.5h7l3.5 3.5v9.5h-10.5z" fill="#f4f8ff" stroke="#a08848"/><path d="M7.5 0.5v3.5h3.5" fill="#e8c880" stroke="#a08848"/><text x="1.2" y="11.5" font-family="Liberation Sans" font-weight="bold" font-size="9" fill="#1a5a9a">.c</text></svg>
<div class="t" style="left:1095px;top:91px;font-size:11.5px">adc.h</div>
<svg class="abs" style="left:1157px;top:89px" width="12" height="14" viewBox="0 0 12 14"><path d="M0.5 0.5h7l3.5 3.5v9.5h-10.5z" fill="#f4f8ff" stroke="#a08848"/><path d="M7.5 0.5v3.5h3.5" fill="#e8c880" stroke="#a08848"/><text x="1.2" y="11.5" font-family="Liberation Sans" font-weight="bold" font-size="9" fill="#1a5a9a">.c</text></svg>
<div class="t" style="left:1174px;top:91px;font-size:11.5px">hall.h</div>
<svg class="abs" style="left:1236px;top:88px" width="14" height="14" viewBox="0 0 14 14"><path d="M0.5 1.5l2.5 2-2.5 2M4 1.5l2.5 2-2.5 2" fill="none" stroke="#000" stroke-width="1.5"/><text x="7" y="13" font-family="Liberation Sans" font-size="9" fill="#000">7</text></svg>
<svg class="abs" style="left:1301px;top:73px" width="18" height="8" viewBox="0 0 18 8"><rect x="0.5" y="1.5" width="7" height="2" fill="none" stroke="#909090"/><rect x="10.5" y="0.5" width="6" height="6" fill="none" stroke="#909090"/><path d="M10.5 3h6" stroke="#909090"/></svg>
<div class="abs" style="left:899px;top:108px;width:390px;height:649px;background:#fff;"></div>
<div class="abs" style="left:899px;top:108px;width:12px;height:649px;background:#f7f7f7;"></div>
<div class="abs" style="left:951px;top:108px;width:1px;height:649px;background:#f4f4f4;"></div>
<div class="abs" style="left:952px;top:397px;width:337px;height:32px;background:#e8f2fe;"></div>
<div class="abs" style="left:1289px;top:108px;width:17px;height:649px;background:#f0f0f0;"></div>
<div class="abs" style="left:952px;top:757px;width:354px;height:15px;background:#f0f0f0;"></div>
<div class="abs" style="left:967px;top:759px;width:213px;height:11px;background:#cdcdcd;"></div>
<div class="abs" style="left:952px;top:108px;width:337px;height:649px;overflow:hidden">
<div class="t mono" style="left:1px;top:3px;font-size:25px;line-height:32px"></div>
<div class="t mono" style="left:1px;top:35px;font-size:25px;line-height:32px"><span class="k">#ifndef</span> INC_CLOCK_H_</div>
<div class="t mono" style="left:1px;top:67px;font-size:25px;line-height:32px"><span class="k">#define</span> INC_CLOCK_H_</div>
<div class="t mono" style="left:1px;top:99px;font-size:25px;line-height:32px"><span class="k">#include</span> <span class="f">"stm32f767xx.h"</span></div>
<div class="t mono" style="left:1px;top:131px;font-size:25px;line-height:32px"><span class="k">void</span> <b>Initialize_MCU</b>(<span class="k">void</span></div>
<div class="t mono" style="left:1px;top:163px;font-size:25px;line-height:32px"><span class="k">void</span> <b>Delay_ms</b>(<span style="color:#005032">uint32_t</span></div>
<div class="t mono" style="left:1px;top:195px;font-size:25px;line-height:32px"><span class="k">void</span> <b>Delay_us</b>(<span style="color:#005032">uint32_t</span></div>
<div class="t mono" style="left:1px;top:227px;font-size:25px;line-height:32px"></div>
<div class="t mono" style="left:1px;top:259px;font-size:25px;line-height:32px"><span class="k">#endif</span><span class="c"> /* INC_CLOCK_H_ */</span></div>
<div class="t mono" style="left:1px;top:291px;font-size:25px;line-height:32px"></div>
</div>
<div class="ln" style="left:905px;top:111px;width:36px;font-size:25px;line-height:32px">1</div>
<div class="ln" style="left:905px;top:143px;width:36px;font-size:25px;line-height:32px">2</div>
<div class="ln" style="left:905px;top:175px;width:36px;font-size:25px;line-height:32px">3</div>
<div class="ln" style="left:905px;top:207px;width:36px;font-size:25px;line-height:32px">4</div>
<div class="ln" style="left:905px;top:239px;width:36px;font-size:25px;line-height:32px">5</div>
<div class="ln" style="left:905px;top:271px;width:36px;font-size:25px;line-height:32px">6</div>
<div class="ln" style="left:905px;top:303px;width:36px;font-size:25px;line-height:32px">7</div>
<div class="ln" style="left:905px;top:335px;width:36px;font-size:25px;line-height:32px">8</div>
<div class="ln" style="left:905px;top:367px;width:36px;font-size:25px;line-height:32px">9</div>
<div class="ln" style="left:905px;top:399px;width:36px;font-size:25px;line-height:32px">10</div>
<div class="abs" style="left:1325px;top:71px;width:595px;height:703px;background:#d8d8d8;"></div>
<div class="abs" style="left:1326px;top:72px;width:594px;height:701px;background:#f0f0f0;"></div>
<div class="abs" style="left:1326px;top:72px;width:78px;height:25px;background:#e6e6e6;"></div>
<div class="abs" style="left:1540px;top:72px;width:379px;height:25px;background:#e6e6e6;"></div>
<div class="abs" style="left:1850px;top:97px;width:69px;height:22px;background:#e6e6e6;"></div>
<div class="abs" style="left:1326px;top:119px;width:593px;height:655px;background:#646464;"></div>
<div class="abs" style="left:1327px;top:120px;width:591px;height:653px;background:#fff;"></div>
<svg class="abs" style="left:1330px;top:81px" width="17" height="11" viewBox="0 0 17 11"><path d="M2.6 0.5Q0.4 5 2.6 9.5M9.4 0.5Q11.6 5 9.4 9.5" fill="none" stroke="#2a7ac0" stroke-width="1.1"/><path d="M4.2 3L7.6 7.5M7.6 3L4.2 7.5" stroke="#2a7ac0" stroke-width="1.1"/><path d="M12.5 4h4M12.5 6.5h4" stroke="#2a7ac0" stroke-width="1"/></svg>
<div class="t" style="left:1349px;top:79px;font-size:11.5px;">Variables</div>
<svg class="abs" style="left:1407px;top:78px" width="17" height="14" viewBox="0 0 17 14"><circle cx="3.8" cy="6.2" r="2.7" fill="none" stroke="#2a4a7a" stroke-width="1.1"/><circle cx="10" cy="7" r="2.7" fill="none" stroke="#2a4a7a" stroke-width="1.1"/><path d="M6.4 6.4L7.4 6.7M1.2 5.5Q1.8 0.8 5 0.8M12.6 6.5Q13 1.8 16 2" fill="none" stroke="#2a4a7a" stroke-width="1.1"/><path d="M5 10.5l2 2M7 10.5l-2 2M9 11h3M9 13h3" fill="none" stroke="#2a4a7a" stroke-width="1"/></svg>
<div class="t" style="left:1427px;top:79px;font-size:11.5px;">Live Expressions</div>
<svg class="abs" style="left:1522px;top:80px" width="10" height="10" viewBox="0 0 10 10"><path d="M0.5 0.5L9.5 9.5M9.5 0.5L0.5 9.5" stroke="#000" stroke-width="1.1"/></svg>
<svg class="abs" style="left:1544px;top:80px" width="13" height="13" viewBox="0 0 13 13"><circle cx="4" cy="4" r="3.3" fill="#3a8ad8"/><circle cx="9" cy="9" r="3.3" fill="#3a8ad8"/></svg>
<div class="t" style="left:1563px;top:79px;font-size:11.5px;">Breakpoints</div>
<svg class="abs" style="left:1636px;top:78px" width="17" height="14" viewBox="0 0 17 14"><circle cx="3.8" cy="6.2" r="2.7" fill="none" stroke="#3a80c0" stroke-width="1.1"/><circle cx="10" cy="7" r="2.7" fill="none" stroke="#3a80c0" stroke-width="1.1"/><path d="M6.4 6.4L7.4 6.7M1.2 5.5Q1.8 0.8 5 0.8M12.6 6.5Q13 1.8 16 2" fill="none" stroke="#3a80c0" stroke-width="1.1"/><path d="M5 10.5l2 2M7 10.5l-2 2M9 11h3M9 13h3" fill="none" stroke="#3a80c0" stroke-width="1"/></svg>
<div class="t" style="left:1656px;top:79px;font-size:11.5px;">Expressions</div>
<svg class="abs" style="left:1727px;top:80px" width="16" height="13" viewBox="0 0 16 13"><text x="0" y="6" font-family="Liberation Sans" font-size="6.5" font-weight="bold" fill="#3a80c0">1010</text><text x="0" y="13" font-family="Liberation Sans" font-size="6.5" font-weight="bold" fill="#3a80c0">0101</text></svg>
<div class="t" style="left:1747px;top:79px;font-size:11.5px;">Registers</div>
<svg class="abs" style="left:1804px;top:81px" width="16" height="10" viewBox="0 0 16 10"><rect x="0.5" y="1.5" width="15" height="7" fill="#5ab040" stroke="#2a7020"/><path d="M3 4h3M7 4h3M11 4h3" stroke="#fff"/></svg>
<div class="t" style="left:1824px;top:79px;font-size:11.5px;">SFRs</div>
<svg class="abs" style="left:1875px;top:80px" width="12" height="6" viewBox="0 0 12 6"><rect x="0.5" y="0.5" width="10" height="4" fill="none" stroke="#000" stroke-width="1.2"/></svg>
<svg class="abs" style="left:1898px;top:79px" width="12" height="13" viewBox="0 0 12 13"><rect x="0.6" y="0.6" width="10" height="11" fill="none" stroke="#000" stroke-width="1.2"/><path d="M0.6 3h10" stroke="#000" stroke-width="1.2"/></svg>
<svg class="abs" style="left:1853px;top:101px" width="16" height="16" viewBox="0 0 16 16"><path d="M3 3l10 10M13 3L3 13" stroke="#a8a8a8" stroke-width="3"/></svg>
<svg class="abs" style="left:1876px;top:100px" width="16" height="16" viewBox="0 0 16 16"><path d="M1 1l7 7M8 1L1 8" stroke="#c0c0c0" stroke-width="2"/><path d="M4 4l10 10M14 4L4 14" stroke="#909090" stroke-width="3"/></svg>
<svg class="abs" style="left:1903px;top:100px" width="6" height="16" viewBox="0 0 6 16"><circle cx="3" cy="3" r="2" fill="#fff" stroke="#707070"/><circle cx="3" cy="8" r="2" fill="#fff" stroke="#707070"/><circle cx="3" cy="13" r="2" fill="#fff" stroke="#707070"/></svg>
<div class="t" style="left:1333px;top:127px;font-size:11.5px;">Expression</div>
<div class="t" style="left:1582px;top:127px;font-size:11.5px;">Type</div>
<div class="t" style="left:1782px;top:127px;font-size:11.5px;">Value</div>
<div class="abs" style="left:1576px;top:120px;width:1px;height:635px;background:#e6e6e6;"></div>
<div class="abs" style="left:1776px;top:120px;width:1px;height:635px;background:#e6e6e6;"></div>
<div class="abs" style="left:1327px;top:161px;width:591px;height:1px;background:#e6e6e6;"></div>
<div class="abs" style="left:1327px;top:179px;width:591px;height:1px;background:#e6e6e6;"></div>
<div class="abs" style="left:1327px;top:197px;width:591px;height:1px;background:#e6e6e6;"></div>
<div class="abs" style="left:1327px;top:215px;width:591px;height:1px;background:#e6e6e6;"></div>
<div class="abs" style="left:1327px;top:233px;width:591px;height:1px;background:#e6e6e6;"></div>
<div class="abs" style="left:1327px;top:251px;width:591px;height:1px;background:#e6e6e6;"></div>
<div class="abs" style="left:1327px;top:269px;width:591px;height:1px;background:#e6e6e6;"></div>
<div class="abs" style="left:1327px;top:287px;width:591px;height:1px;background:#e6e6e6;"></div>
<div class="abs" style="left:1327px;top:305px;width:591px;height:1px;background:#e6e6e6;"></div>
<div class="abs" style="left:1327px;top:323px;width:591px;height:1px;background:#e6e6e6;"></div>
<div class="abs" style="left:1327px;top:341px;width:591px;height:1px;background:#e6e6e6;"></div>
<div class="abs" style="left:1327px;top:359px;width:591px;height:1px;background:#e6e6e6;"></div>
<div class="abs" style="left:1327px;top:377px;width:591px;height:1px;background:#e6e6e6;"></div>
<div class="abs" style="left:1327px;top:395px;width:591px;height:1px;background:#e6e6e6;"></div>
<div class="abs" style="left:1327px;top:413px;width:591px;height:1px;background:#e6e6e6;"></div>
<div class="abs" style="left:1327px;top:431px;width:591px;height:1px;background:#e6e6e6;"></div>
<div class="abs" style="left:1327px;top:449px;width:591px;height:1px;background:#e6e6e6;"></div>
<div class="abs" style="left:1327px;top:467px;width:591px;height:1px;background:#e6e6e6;"></div>
<div class="abs" style="left:1327px;top:485px;width:591px;height:1px;background:#e6e6e6;"></div>
<div class="abs" style="left:1327px;top:503px;width:591px;height:1px;background:#e6e6e6;"></div>
<div class="abs" style="left:1327px;top:521px;width:591px;height:1px;background:#e6e6e6;"></div>
<div class="abs" style="left:1327px;top:539px;width:591px;height:1px;background:#e6e6e6;"></div>
<div class="abs" style="left:1327px;top:557px;width:591px;height:1px;background:#e6e6e6;"></div>
<div class="abs" style="left:1327px;top:575px;width:591px;height:1px;background:#e6e6e6;"></div>
<div class="abs" style="left:1327px;top:593px;width:591px;height:1px;background:#e6e6e6;"></div>
<div class="abs" style="left:1327px;top:611px;width:591px;height:1px;background:#e6e6e6;"></div>
<div class="abs" style="left:1327px;top:629px;width:591px;height:1px;background:#e6e6e6;"></div>
<div class="abs" style="left:1327px;top:647px;width:591px;height:1px;background:#e6e6e6;"></div>
<div class="abs" style="left:1327px;top:665px;width:591px;height:1px;background:#e6e6e6;"></div>
<div class="abs" style="left:1327px;top:683px;width:591px;height:1px;background:#e6e6e6;"></div>
<div class="abs" style="left:1327px;top:701px;width:591px;height:1px;background:#e6e6e6;"></div>
<div class="abs" style="left:1327px;top:719px;width:591px;height:1px;background:#e6e6e6;"></div>
<div class="abs" style="left:1327px;top:737px;width:591px;height:1px;background:#e6e6e6;"></div>
<div class="abs" style="left:1327px;top:755px;width:591px;height:1px;background:#e6e6e6;"></div>
<div class="abs" style="left:1777px;top:144px;width:141px;height:17px;background:#ffff00;"></div>
<svg class="abs" style="left:1346px;top:148px" width="17" height="10" viewBox="0 0 17 10"><path d="M2.6 0.5Q0.6 4.5 2.6 8.5M9.4 0.5Q11.4 4.5 9.4 8.5" fill="none" stroke="#34486a" stroke-width="1.6"/><path d="M4.2 2.6L7.6 7M7.6 2.6L4.2 7" stroke="#34486a" stroke-width="1.3"/><path d="M12.5 3.5h4M12.5 6h4" stroke="#34486a" stroke-width="1.1"/></svg>
<div class="t" style="left:1367px;top:148px;font-size:11.5px;">Vdc</div>
<div class="t" style="left:1582px;top:147px;font-size:11.5px;font-size:12px">float</div>
<div class="t" style="left:1782px;top:147px;font-size:11.5px;font-size:12px">23.3910637</div>
<div class="abs" style="left:1777px;top:162px;width:141px;height:17px;background:#ffff00;"></div>
<svg class="abs" style="left:1346px;top:166px" width="17" height="10" viewBox="0 0 17 10"><path d="M2.6 0.5Q0.6 4.5 2.6 8.5M9.4 0.5Q11.4 4.5 9.4 8.5" fill="none" stroke="#34486a" stroke-width="1.6"/><path d="M4.2 2.6L7.6 7M7.6 2.6L4.2 7" stroke="#34486a" stroke-width="1.3"/><path d="M12.5 3.5h4M12.5 6h4" stroke="#34486a" stroke-width="1.1"/></svg>
<div class="t" style="left:1367px;top:166px;font-size:11.5px;">VoltageRef</div>
<div class="t" style="left:1582px;top:165px;font-size:11.5px;font-size:12px">uint32_t</div>
<div class="t" style="left:1782px;top:165px;font-size:11.5px;font-size:12px">3536</div>
<svg class="abs" style="left:1346px;top:184px" width="17" height="10" viewBox="0 0 17 10"><path d="M2.6 0.5Q0.6 4.5 2.6 8.5M9.4 0.5Q11.4 4.5 9.4 8.5" fill="none" stroke="#34486a" stroke-width="1.6"/><path d="M4.2 2.6L7.6 7M7.6 2.6L4.2 7" stroke="#34486a" stroke-width="1.3"/><path d="M12.5 3.5h4M12.5 6h4" stroke="#34486a" stroke-width="1.1"/></svg>
<div class="t" style="left:1367px;top:184px;font-size:11.5px;">FltFlg</div>
<div class="t" style="left:1582px;top:183px;font-size:11.5px;font-size:12px">uint8_t</div>
<div class="t" style="left:1782px;top:183px;font-size:11.5px;font-size:12px">0 '₩0'</div>
<div class="abs" style="left:1777px;top:198px;width:141px;height:17px;background:#ffff00;"></div>
<svg class="abs" style="left:1346px;top:202px" width="17" height="10" viewBox="0 0 17 10"><path d="M2.6 0.5Q0.6 4.5 2.6 8.5M9.4 0.5Q11.4 4.5 9.4 8.5" fill="none" stroke="#34486a" stroke-width="1.6"/><path d="M4.2 2.6L7.6 7M7.6 2.6L4.2 7" stroke="#34486a" stroke-width="1.3"/><path d="M12.5 3.5h4M12.5 6h4" stroke="#34486a" stroke-width="1.1"/></svg>
<div class="t" style="left:1367px;top:202px;font-size:11.5px;">InitCal</div>
<div class="t" style="left:1582px;top:201px;font-size:11.5px;font-size:12px">uint8_t</div>
<div class="t" style="left:1782px;top:201px;font-size:11.5px;font-size:12px">1 '₩001'</div>
<div class="abs" style="left:1777px;top:216px;width:141px;height:17px;background:#ffff00;"></div>
<svg class="abs" style="left:1346px;top:220px" width="17" height="10" viewBox="0 0 17 10"><path d="M2.6 0.5Q0.6 4.5 2.6 8.5M9.4 0.5Q11.4 4.5 9.4 8.5" fill="none" stroke="#34486a" stroke-width="1.6"/><path d="M4.2 2.6L7.6 7M7.6 2.6L4.2 7" stroke="#34486a" stroke-width="1.3"/><path d="M12.5 3.5h4M12.5 6h4" stroke="#34486a" stroke-width="1.1"/></svg>
<div class="t" style="left:1367px;top:220px;font-size:11.5px;">Throttle_ADC</div>
<div class="t" style="left:1582px;top:219px;font-size:11.5px;font-size:12px">float</div>
<div class="t" style="left:1782px;top:219px;font-size:11.5px;font-size:12px">2.57553101</div>
<div class="abs" style="left:1777px;top:234px;width:141px;height:17px;background:#ffff00;"></div>
<svg class="abs" style="left:1346px;top:238px" width="17" height="10" viewBox="0 0 17 10"><path d="M2.6 0.5Q0.6 4.5 2.6 8.5M9.4 0.5Q11.4 4.5 9.4 8.5" fill="none" stroke="#34486a" stroke-width="1.6"/><path d="M4.2 2.6L7.6 7M7.6 2.6L4.2 7" stroke="#34486a" stroke-width="1.3"/><path d="M12.5 3.5h4M12.5 6h4" stroke="#34486a" stroke-width="1.1"/></svg>
<div class="t" style="left:1367px;top:238px;font-size:11.5px;">ThrottleActive</div>
<div class="t" style="left:1582px;top:237px;font-size:11.5px;font-size:12px">uint8_t</div>
<div class="t" style="left:1782px;top:237px;font-size:11.5px;font-size:12px">1 '₩001'</div>
<div class="abs" style="left:1777px;top:252px;width:141px;height:17px;background:#ffff00;"></div>
<svg class="abs" style="left:1346px;top:256px" width="17" height="10" viewBox="0 0 17 10"><path d="M2.6 0.5Q0.6 4.5 2.6 8.5M9.4 0.5Q11.4 4.5 9.4 8.5" fill="none" stroke="#34486a" stroke-width="1.6"/><path d="M4.2 2.6L7.6 7M7.6 2.6L4.2 7" stroke="#34486a" stroke-width="1.3"/><path d="M12.5 3.5h4M12.5 6h4" stroke="#34486a" stroke-width="1.1"/></svg>
<div class="t" style="left:1367px;top:256px;font-size:11.5px;">ThrottleRef</div>
<div class="t" style="left:1582px;top:255px;font-size:11.5px;font-size:12px">float</div>
<div class="t" style="left:1782px;top:255px;font-size:11.5px;font-size:12px">6214.06641</div>
<div class="abs" style="left:1777px;top:270px;width:141px;height:17px;background:#ffff00;"></div>
<svg class="abs" style="left:1346px;top:274px" width="17" height="10" viewBox="0 0 17 10"><path d="M2.6 0.5Q0.6 4.5 2.6 8.5M9.4 0.5Q11.4 4.5 9.4 8.5" fill="none" stroke="#34486a" stroke-width="1.6"/><path d="M4.2 2.6L7.6 7M7.6 2.6L4.2 7" stroke="#34486a" stroke-width="1.3"/><path d="M12.5 3.5h4M12.5 6h4" stroke="#34486a" stroke-width="1.1"/></svg>
<div class="t" style="left:1367px;top:274px;font-size:11.5px;">ThrottleRef_Ramp</div>
<div class="t" style="left:1582px;top:273px;font-size:11.5px;font-size:12px">float</div>
<div class="t" style="left:1782px;top:273px;font-size:11.5px;font-size:12px">3809.5376</div>
<svg class="abs" style="left:1346px;top:292px" width="17" height="10" viewBox="0 0 17 10"><path d="M2.6 0.5Q0.6 4.5 2.6 8.5M9.4 0.5Q11.4 4.5 9.4 8.5" fill="none" stroke="#34486a" stroke-width="1.6"/><path d="M4.2 2.6L7.6 7M7.6 2.6L4.2 7" stroke="#34486a" stroke-width="1.3"/><path d="M12.5 3.5h4M12.5 6h4" stroke="#34486a" stroke-width="1.1"/></svg>
<div class="t" style="left:1367px;top:292px;font-size:11.5px;">iRamp</div>
<div class="t" style="left:1582px;top:291px;font-size:11.5px;font-size:12px">float</div>
<div class="t" style="left:1782px;top:291px;font-size:11.5px;font-size:12px">0.150000006</div>
<div class="abs" style="left:1777px;top:306px;width:141px;height:17px;background:#ffff00;"></div>
<svg class="abs" style="left:1346px;top:310px" width="17" height="10" viewBox="0 0 17 10"><path d="M2.6 0.5Q0.6 4.5 2.6 8.5M9.4 0.5Q11.4 4.5 9.4 8.5" fill="none" stroke="#34486a" stroke-width="1.6"/><path d="M4.2 2.6L7.6 7M7.6 2.6L4.2 7" stroke="#34486a" stroke-width="1.3"/><path d="M12.5 3.5h4M12.5 6h4" stroke="#34486a" stroke-width="1.1"/></svg>
<div class="t" style="left:1367px;top:310px;font-size:11.5px;">DutyA</div>
<div class="t" style="left:1582px;top:309px;font-size:11.5px;font-size:12px">uint32_t</div>
<div class="t" style="left:1782px;top:309px;font-size:11.5px;font-size:12px">1498</div>
<div class="abs" style="left:1777px;top:324px;width:141px;height:17px;background:#ffff00;"></div>
<svg class="abs" style="left:1346px;top:328px" width="17" height="10" viewBox="0 0 17 10"><path d="M2.6 0.5Q0.6 4.5 2.6 8.5M9.4 0.5Q11.4 4.5 9.4 8.5" fill="none" stroke="#34486a" stroke-width="1.6"/><path d="M4.2 2.6L7.6 7M7.6 2.6L4.2 7" stroke="#34486a" stroke-width="1.3"/><path d="M12.5 3.5h4M12.5 6h4" stroke="#34486a" stroke-width="1.1"/></svg>
<div class="t" style="left:1367px;top:328px;font-size:11.5px;">DutyB</div>
<div class="t" style="left:1582px;top:327px;font-size:11.5px;font-size:12px">uint32_t</div>
<div class="t" style="left:1782px;top:327px;font-size:11.5px;font-size:12px">1454</div>
<div class="abs" style="left:1777px;top:342px;width:141px;height:17px;background:#ffff00;"></div>
<svg class="abs" style="left:1346px;top:346px" width="17" height="10" viewBox="0 0 17 10"><path d="M2.6 0.5Q0.6 4.5 2.6 8.5M9.4 0.5Q11.4 4.5 9.4 8.5" fill="none" stroke="#34486a" stroke-width="1.6"/><path d="M4.2 2.6L7.6 7M7.6 2.6L4.2 7" stroke="#34486a" stroke-width="1.3"/><path d="M12.5 3.5h4M12.5 6h4" stroke="#34486a" stroke-width="1.1"/></svg>
<div class="t" style="left:1367px;top:346px;font-size:11.5px;">DutyC</div>
<div class="t" style="left:1582px;top:345px;font-size:11.5px;font-size:12px">uint32_t</div>
<div class="t" style="left:1782px;top:345px;font-size:11.5px;font-size:12px">1405</div>
<svg class="abs" style="left:1346px;top:364px" width="17" height="10" viewBox="0 0 17 10"><path d="M2.6 0.5Q0.6 4.5 2.6 8.5M9.4 0.5Q11.4 4.5 9.4 8.5" fill="none" stroke="#34486a" stroke-width="1.6"/><path d="M4.2 2.6L7.6 7M7.6 2.6L4.2 7" stroke="#34486a" stroke-width="1.3"/><path d="M12.5 3.5h4M12.5 6h4" stroke="#34486a" stroke-width="1.1"/></svg>
<div class="t" style="left:1367px;top:364px;font-size:11.5px;">StartFlag</div>
<div class="t" style="left:1582px;top:363px;font-size:11.5px;font-size:12px">uint8_t</div>
<div class="t" style="left:1782px;top:363px;font-size:11.5px;font-size:12px">1 '₩001'</div>
<div class="abs" style="left:1777px;top:378px;width:141px;height:17px;background:#ffff00;"></div>
<svg class="abs" style="left:1346px;top:382px" width="17" height="10" viewBox="0 0 17 10"><path d="M2.6 0.5Q0.6 4.5 2.6 8.5M9.4 0.5Q11.4 4.5 9.4 8.5" fill="none" stroke="#34486a" stroke-width="1.6"/><path d="M4.2 2.6L7.6 7M7.6 2.6L4.2 7" stroke="#34486a" stroke-width="1.3"/><path d="M12.5 3.5h4M12.5 6h4" stroke="#34486a" stroke-width="1.1"/></svg>
<div class="t" style="left:1367px;top:382px;font-size:11.5px;">HA</div>
<div class="t" style="left:1582px;top:381px;font-size:11.5px;font-size:12px">uint8_t</div>
<div class="t" style="left:1782px;top:381px;font-size:11.5px;font-size:12px">0 '₩0'</div>
<div class="abs" style="left:1777px;top:396px;width:141px;height:17px;background:#ffff00;"></div>
<svg class="abs" style="left:1346px;top:400px" width="17" height="10" viewBox="0 0 17 10"><path d="M2.6 0.5Q0.6 4.5 2.6 8.5M9.4 0.5Q11.4 4.5 9.4 8.5" fill="none" stroke="#34486a" stroke-width="1.6"/><path d="M4.2 2.6L7.6 7M7.6 2.6L4.2 7" stroke="#34486a" stroke-width="1.3"/><path d="M12.5 3.5h4M12.5 6h4" stroke="#34486a" stroke-width="1.1"/></svg>
<div class="t" style="left:1367px;top:400px;font-size:11.5px;">HB</div>
<div class="t" style="left:1582px;top:399px;font-size:11.5px;font-size:12px">uint8_t</div>
<div class="t" style="left:1782px;top:399px;font-size:11.5px;font-size:12px">0 '₩0'</div>
<div class="abs" style="left:1777px;top:414px;width:141px;height:17px;background:#ffff00;"></div>
<svg class="abs" style="left:1346px;top:418px" width="17" height="10" viewBox="0 0 17 10"><path d="M2.6 0.5Q0.6 4.5 2.6 8.5M9.4 0.5Q11.4 4.5 9.4 8.5" fill="none" stroke="#34486a" stroke-width="1.6"/><path d="M4.2 2.6L7.6 7M7.6 2.6L4.2 7" stroke="#34486a" stroke-width="1.3"/><path d="M12.5 3.5h4M12.5 6h4" stroke="#34486a" stroke-width="1.1"/></svg>
<div class="t" style="left:1367px;top:418px;font-size:11.5px;">HC</div>
<div class="t" style="left:1582px;top:417px;font-size:11.5px;font-size:12px">uint8_t</div>
<div class="t" style="left:1782px;top:417px;font-size:11.5px;font-size:12px">1 '₩001'</div>
<div class="abs" style="left:1777px;top:432px;width:141px;height:17px;background:#ffff00;"></div>
<svg class="abs" style="left:1346px;top:436px" width="17" height="10" viewBox="0 0 17 10"><path d="M2.6 0.5Q0.6 4.5 2.6 8.5M9.4 0.5Q11.4 4.5 9.4 8.5" fill="none" stroke="#34486a" stroke-width="1.6"/><path d="M4.2 2.6L7.6 7M7.6 2.6L4.2 7" stroke="#34486a" stroke-width="1.3"/><path d="M12.5 3.5h4M12.5 6h4" stroke="#34486a" stroke-width="1.1"/></svg>
<div class="t" style="left:1367px;top:436px;font-size:11.5px;">ias</div>
<div class="t" style="left:1582px;top:435px;font-size:11.5px;font-size:12px">float</div>
<div class="t" style="left:1782px;top:435px;font-size:11.5px;font-size:12px">6.9871788</div>
<div class="abs" style="left:1777px;top:450px;width:141px;height:17px;background:#ffff00;"></div>
<svg class="abs" style="left:1346px;top:454px" width="17" height="10" viewBox="0 0 17 10"><path d="M2.6 0.5Q0.6 4.5 2.6 8.5M9.4 0.5Q11.4 4.5 9.4 8.5" fill="none" stroke="#34486a" stroke-width="1.6"/><path d="M4.2 2.6L7.6 7M7.6 2.6L4.2 7" stroke="#34486a" stroke-width="1.3"/><path d="M12.5 3.5h4M12.5 6h4" stroke="#34486a" stroke-width="1.1"/></svg>
<div class="t" style="left:1367px;top:454px;font-size:11.5px;">ibs</div>
<div class="t" style="left:1582px;top:453px;font-size:11.5px;font-size:12px">float</div>
<div class="t" style="left:1782px;top:453px;font-size:11.5px;font-size:12px">0.00915744063</div>
<div class="abs" style="left:1777px;top:468px;width:141px;height:17px;background:#ffff00;"></div>
<svg class="abs" style="left:1346px;top:472px" width="17" height="10" viewBox="0 0 17 10"><path d="M2.6 0.5Q0.6 4.5 2.6 8.5M9.4 0.5Q11.4 4.5 9.4 8.5" fill="none" stroke="#34486a" stroke-width="1.6"/><path d="M4.2 2.6L7.6 7M7.6 2.6L4.2 7" stroke="#34486a" stroke-width="1.3"/><path d="M12.5 3.5h4M12.5 6h4" stroke="#34486a" stroke-width="1.1"/></svg>
<div class="t" style="left:1367px;top:472px;font-size:11.5px;">ics</div>
<div class="t" style="left:1582px;top:471px;font-size:11.5px;font-size:12px">float</div>
<div class="t" style="left:1782px;top:471px;font-size:11.5px;font-size:12px">-0.0457872041</div>
<div class="abs" style="left:1777px;top:486px;width:141px;height:17px;background:#ffff00;"></div>
<svg class="abs" style="left:1346px;top:490px" width="17" height="10" viewBox="0 0 17 10"><path d="M2.6 0.5Q0.6 4.5 2.6 8.5M9.4 0.5Q11.4 4.5 9.4 8.5" fill="none" stroke="#34486a" stroke-width="1.6"/><path d="M4.2 2.6L7.6 7M7.6 2.6L4.2 7" stroke="#34486a" stroke-width="1.3"/><path d="M12.5 3.5h4M12.5 6h4" stroke="#34486a" stroke-width="1.1"/></svg>
<div class="t" style="left:1367px;top:490px;font-size:11.5px;">speed_km_h</div>
<div class="t" style="left:1582px;top:489px;font-size:11.5px;font-size:12px">volatile float</div>
<div class="t" style="left:1782px;top:489px;font-size:11.5px;font-size:12px">75.8952637</div>
<svg class="abs" style="left:1347px;top:507px" width="13" height="13" viewBox="0 0 13 13"><path d="M4.5 0.5h3.5v4h4v3.5h-4v4h-3.5v-4h-4v-3.5h4z" fill="#b0d860" stroke="#3a8a3a"/></svg>
<div class="t" style="left:1367px;top:508px;font-size:11.5px;font-style:italic;font-size:12px">Add new expression</div>
<div class="abs" style="left:1327px;top:756px;width:591px;height:17px;background:#f0f0f0;"></div>
<div class="abs" style="left:1344px;top:758px;width:314px;height:13px;background:#cdcdcd;"></div>
<svg class="abs" style="left:1332px;top:760px" width="6" height="9" viewBox="0 0 6 9"><path d="M5 1L1.5 4.5 5 8" fill="none" stroke="#404040" stroke-width="1.6"/></svg>
<svg class="abs" style="left:1907px;top:760px" width="6" height="9" viewBox="0 0 6 9"><path d="M1 1l3.5 3.5L1 8" fill="none" stroke="#404040" stroke-width="1.6"/></svg>
<svg class="abs" style="left:867px;top:114px" width="9" height="6" viewBox="0 0 9 6"><path d="M1 5l3.5-3.5L8 5" fill="none" stroke="#404040" stroke-width="1.6"/></svg>
<svg class="abs" style="left:867px;top:745px" width="9" height="6" viewBox="0 0 9 6"><path d="M1 1l3.5 3.5L8 1" fill="none" stroke="#404040" stroke-width="1.6"/></svg>
<svg class="abs" style="left:264px;top:760px" width="6" height="9" viewBox="0 0 6 9"><path d="M5 1L1.5 4.5 5 8" fill="none" stroke="#404040" stroke-width="1.6"/></svg>
<svg class="abs" style="left:851px;top:760px" width="6" height="9" viewBox="0 0 6 9"><path d="M1 1l3.5 3.5L1 8" fill="none" stroke="#404040" stroke-width="1.6"/></svg>
<svg class="abs" style="left:1293px;top:114px" width="9" height="6" viewBox="0 0 9 6"><path d="M1 5l3.5-3.5L8 5" fill="none" stroke="#a0a0a0" stroke-width="1.6"/></svg>
<svg class="abs" style="left:1293px;top:745px" width="9" height="6" viewBox="0 0 9 6"><path d="M1 1l3.5 3.5L8 1" fill="none" stroke="#a0a0a0" stroke-width="1.6"/></svg>
<svg class="abs" style="left:956px;top:760px" width="6" height="9" viewBox="0 0 6 9"><path d="M5 1L1.5 4.5 5 8" fill="none" stroke="#404040" stroke-width="1.6"/></svg>
<svg class="abs" style="left:1279px;top:760px" width="6" height="9" viewBox="0 0 6 9"><path d="M1 1l3.5 3.5L1 8" fill="none" stroke="#404040" stroke-width="1.6"/></svg>
<div class="abs" style="left:215px;top:779px;width:1705px;height:156px;background:#d8d8d8;"></div>
<div class="abs" style="left:216px;top:780px;width:1704px;height:155px;background:#f0f0f0;"></div>
<div class="abs" style="left:309px;top:780px;width:1611px;height:24px;background:#e6e6e6;"></div>
<div class="abs" style="left:216px;top:820px;width:1704px;height:1px;background:#a8a8a8;"></div>
<div class="abs" style="left:216px;top:821px;width:1688px;height:114px;background:#fff;"></div>
<div class="abs" style="left:1904px;top:821px;width:16px;height:114px;background:#f0f0f0;"></div>
<svg class="abs" style="left:1907px;top:828px" width="9" height="6" viewBox="0 0 9 6"><path d="M1 5l3.5-3.5L8 5" fill="none" stroke="#404040" stroke-width="1.6"/></svg>
<svg class="abs" style="left:221px;top:786px" width="16" height="15" viewBox="0 0 16 15"><rect x="1" y="1" width="14" height="10" rx="1" fill="#dbe8f8" stroke="#3a6ab0" stroke-width="1.3"/><path d="M4 4h8M4 7h6" stroke="#3a6ab0"/><path d="M5 14h6M8 11v3" stroke="#3a6ab0" stroke-width="1.5"/></svg>
<div class="t" style="left:240px;top:788px;font-size:11.5px;">Console</div>
<svg class="abs" style="left:292px;top:789px" width="10" height="10" viewBox="0 0 10 10"><path d="M0.5 0.5L9.5 9.5M9.5 0.5L0.5 9.5" stroke="#000" stroke-width="1.1"/></svg>
<svg class="abs" style="left:312px;top:785px" width="16" height="16" viewBox="0 0 16 16"><rect x="0.5" y="0.5" width="12" height="15" fill="#f0f0f8" stroke="#8090b0"/><circle cx="4.5" cy="5" r="2.5" fill="#e02020"/><path d="M2 14l2.5-5 2.5 5z" fill="#f0a020"/><path d="M9 2v12" stroke="#8090b0"/></svg>
<div class="t" style="left:333px;top:788px;font-size:11.5px;">Problems</div>
<svg class="abs" style="left:393px;top:785px" width="16" height="16" viewBox="0 0 16 16"><circle cx="8" cy="8" r="7" fill="#7aa8e0" stroke="#3a6ab0"/><path d="M6 4v8l6-4z" fill="#fff"/></svg>
<div class="t" style="left:413px;top:788px;font-size:11.5px;">Executables</div>
<svg class="abs" style="left:486px;top:785px" width="17" height="16" viewBox="0 0 17 16"><rect x="0.5" y="1.5" width="13" height="10" fill="#dbe8f8" stroke="#3a6ab0"/><path d="M3 5h8M3 8h6" stroke="#3a6ab0"/><circle cx="12" cy="12" r="3.5" fill="#3aa04a"/></svg>
<div class="t" style="left:505px;top:788px;font-size:11.5px;">Debugger Console</div>
<svg class="abs" style="left:618px;top:786px" width="10" height="16" viewBox="0 0 10 16"><rect x="0.5" y="0.5" width="9" height="15" rx="3" fill="#6a98d8" stroke="#2a5aa0"/><ellipse cx="5" cy="3" rx="3.5" ry="2" fill="#b8d0f0"/></svg>
<div class="t" style="left:635px;top:788px;font-size:11.5px;">Memory</div>
<div class="t" style="left:216px;top:807px;font-size:11.5px;font-size:12px;word-spacing:1px">EBike_Final Debug [STM32 C/C++ Application]  [pid: 15]</div>
<div class="t mono" style="left:218px;top:864px;font-size:11.67px">Verifying ...</div>
<svg class="abs" style="left:1576px;top:786px" width="13" height="13" viewBox="0 0 13 13"><rect x="0.5" y="0.5" width="12" height="12" rx="1.5" fill="#e8202a" stroke="#c01818"/></svg>
<svg class="abs" style="left:1598px;top:785px" width="16" height="16" viewBox="0 0 16 16"><path d="M3 3l10 10M13 3L3 13" stroke="#a8a8a8" stroke-width="3"/></svg>
<svg class="abs" style="left:1620px;top:785px" width="16" height="16" viewBox="0 0 16 16"><path d="M1 1l7 7M8 1L1 8" stroke="#c0c0c0" stroke-width="2"/><path d="M4 4l10 10M14 4L4 14" stroke="#909090" stroke-width="3"/></svg>
<svg class="abs" style="left:1642px;top:784px" width="1" height="17" viewBox="0 0 1 17"><rect width="1" height="17" fill="#8a8a8a"/></svg>
<svg class="abs" style="left:1651px;top:785px" width="16" height="16" viewBox="0 0 16 16"><path d="M0.5 0.5h8l3 3v11h-11z" fill="#fafafa" stroke="#b0a080"/><path d="M2 4h6M2 6h7M2 8h7M2 10h5" stroke="#7a90c0"/><path d="M10 10l5 5M15 10l-5 5" stroke="#606060" stroke-width="1.5"/></svg>
<svg class="abs" style="left:1674px;top:785px" width="16" height="16" viewBox="0 0 16 16"><rect x="0.5" y="0.5" width="15" height="14" fill="#fafafa" stroke="#8090b0"/><path d="M11 1v14" stroke="#8090b0"/><rect x="1" y="8" width="7" height="7" fill="#e0b040" stroke="#a07020"/></svg>
<svg class="abs" style="left:1697px;top:785px" width="16" height="16" viewBox="0 0 16 16"><path d="M0.5 0.5h8l3 3v11h-11z" fill="#fafafa" stroke="#b0a080"/><path d="M2 4h6M2 6h7M2 8h5" stroke="#7a90c0"/><path d="M14 6v5H8" fill="none" stroke="#d0a020" stroke-width="2"/></svg>
<div class="abs" style="left:1717px;top:781px;width:46px;height:20px;background:#cce4f7;border:1px solid #99c9ef"></div>
<div class="abs" style="left:1740px;top:781px;width:1px;height:20px;background:#99c9ef;"></div>
<svg class="abs" style="left:1721px;top:784px" width="16" height="16" viewBox="0 0 16 16"><rect x="3.5" y="0.5" width="12" height="9" fill="#fff" stroke="#3a6ab0"/><path d="M6 3.5h7M6 6h6" stroke="#3a6ab0"/><rect x="0.5" y="6.5" width="8" height="6" fill="#dbe8f8" stroke="#3a6ab0"/><path d="M2 15h5" stroke="#3a6ab0" stroke-width="1.5"/></svg>
<svg class="abs" style="left:1744px;top:784px" width="16" height="16" viewBox="0 0 16 16"><rect x="3.5" y="0.5" width="12" height="9" fill="#fff" stroke="#3a6ab0"/><path d="M6 3l3 3M9 3L6 6" stroke="#e02020" stroke-width="1.3"/><path d="M11 4h3" stroke="#3a6ab0"/><rect x="0.5" y="6.5" width="8" height="6" fill="#dbe8f8" stroke="#3a6ab0"/><path d="M2 15h5" stroke="#3a6ab0" stroke-width="1.5"/></svg>
<svg class="abs" style="left:1765px;top:784px" width="1" height="17" viewBox="0 0 1 17"><rect width="1" height="17" fill="#8a8a8a"/></svg>
<svg class="abs" style="left:1773px;top:785px" width="16" height="16" viewBox="0 0 16 16"><rect x="0.5" y="4.5" width="13" height="11" fill="#eaf4fc" stroke="#7a8aa0"/><rect x="1" y="5" width="12" height="2" fill="#3a80c8"/><path d="M8 9l5-5" stroke="#2a7a2a" stroke-width="1.5"/><circle cx="13" cy="3" r="2.8" fill="#3aa04a"/></svg>
<svg class="abs" style="left:1797px;top:784px" width="16" height="16" viewBox="0 0 16 16"><rect x="0.5" y="1.5" width="14" height="10" rx="1" fill="#dbe8f8" stroke="#2a5aa0" stroke-width="1.3"/><path d="M3 5h8M3 8h6" stroke="#2a5aa0"/><path d="M4 14h7" stroke="#2a5aa0" stroke-width="1.6"/></svg>
<svg class="abs" style="left:1820px;top:791px" width="7" height="4" viewBox="0 0 7 4"><path d="M0 0h7L3.5 4z" fill="#000"/></svg>
<svg class="abs" style="left:1836px;top:785px" width="16" height="16" viewBox="0 0 16 16"><rect x="0.5" y="3.5" width="13" height="11" fill="#eaf4fc" stroke="#b59b62"/><rect x="1" y="4" width="12" height="2" fill="#4a90d0"/><path d="M3 14 Q10 13 12 6" stroke="#e8d070" fill="none" stroke-width="1.5"/><circle cx="12.5" cy="3.5" r="3" fill="#fff4c0" stroke="#d4a838"/><path d="M12.5 1.5v4M10.5 3.5h4" stroke="#d4a838"/></svg>
<svg class="abs" style="left:1859px;top:791px" width="7" height="4" viewBox="0 0 7 4"><path d="M0 0h7L3.5 4z" fill="#000"/></svg>
<svg class="abs" style="left:1878px;top:788px" width="12" height="6" viewBox="0 0 12 6"><rect x="0.5" y="0.5" width="10" height="4" fill="none" stroke="#000" stroke-width="1.2"/></svg>
<svg class="abs" style="left:1898px;top:786px" width="12" height="13" viewBox="0 0 12 13"><rect x="0.6" y="0.6" width="10" height="11" fill="none" stroke="#000" stroke-width="1.2"/><path d="M0.6 3h10" stroke="#000" stroke-width="1.2"/></svg>
<div class="abs" style="left:1678px;top:913px;width:224px;height:22px;background:#909090;box-shadow:0 0 8px rgba(0,0,0,0.18)"></div>
<div class="abs" style="left:1679px;top:914px;width:222px;height:21px;background:#fff;"></div>
<div class="t" style="left:1679px;top:925px;font-size:11.5px;font-size:12.5px;font-weight:bold">Updates Available</div>
<svg class="abs" style="left:1884px;top:927px" width="9" height="9" viewBox="0 0 9 9"><path d="M0.5 0.5L8.5 8.5M8.5 0.5L0.5 8.5" stroke="#000" stroke-width="1.1"/></svg>
</body></html>
